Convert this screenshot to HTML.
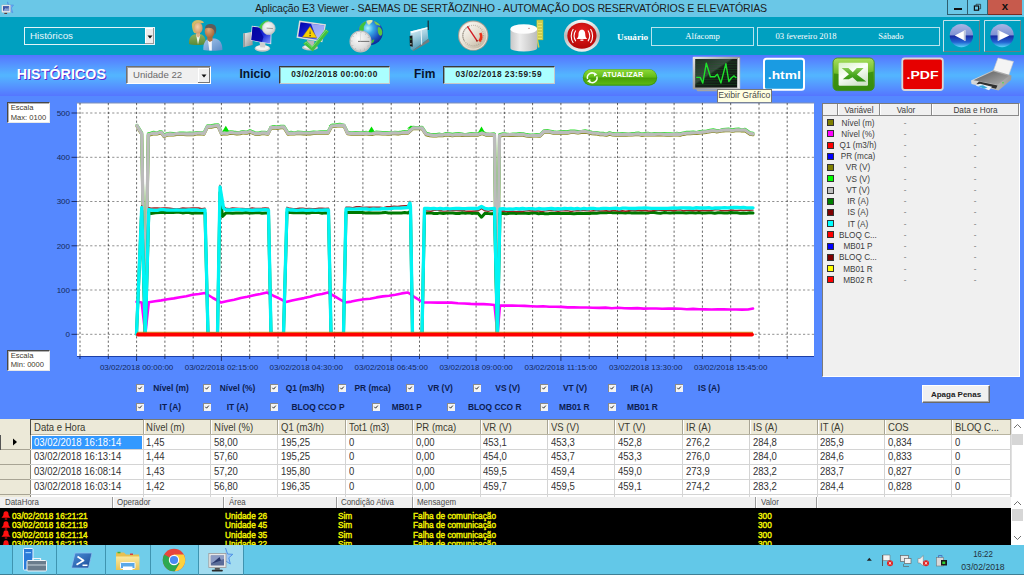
<!DOCTYPE html>
<html lang="pt-BR">
<head>
<meta charset="utf-8">
<title>Aplicação E3 Viewer - SAEMAS DE SERTÃOZINHO</title>
<style>
html,body{margin:0;padding:0;background:#5588ff;}
body{width:1024px;height:575px;overflow:hidden;position:relative;font-family:"Liberation Sans",sans-serif;}
.abs{position:absolute;}
#root{position:absolute;left:0;top:0;width:1024px;height:575px;overflow:hidden;background:#5588ff;}
#titlebar{left:0;top:0;width:1024px;height:17px;background:#6ac7e7;}
#title{left:0;top:1.5px;width:1022px;text-align:center;font-size:10.6px;color:#1c1c1c;white-space:nowrap;letter-spacing:-0.18px}
#toolbar{left:0;top:17px;width:1024px;height:37.5px;background:#00a0c0;}
#band{left:0;top:54.5px;width:1024px;height:41px;background:linear-gradient(to bottom,#5574ff 0%,#5596ff 25%,#53b4ff 48%,#53b4ff 52%,#5596ff 75%,#5576ff 100%);}
.ax{font-family:"Liberation Sans",sans-serif;font-size:8px;fill:#14285a;}
.sw{width:5px;height:5px;border:1px solid #333;}
.lt{font-size:8.2px;color:#3c3c3c;text-align:center;white-space:nowrap;line-height:12px;height:12px}
.cb{width:8px;height:8px;background:#f4f4f4;box-shadow:inset 1px 1px 0 #8a8a8a;line-height:0}
.cl{width:80px;text-align:center;font-size:8.4px;font-weight:bold;color:#0c1c50;white-space:nowrap;line-height:11px;margin-top:0.7px}
.th{font-size:10.3px;color:#3a3a30;white-space:nowrap;overflow:hidden;line-height:12px;height:12px;transform:scaleX(0.925);transform-origin:0 50%}
.td{font-size:10.3px;color:#333;white-space:nowrap;line-height:12px;transform:scaleX(0.925);transform-origin:0 50%}
.ah{font-size:8.8px;color:#4a4a4a;white-space:nowrap;line-height:10px;transform:scaleX(0.9);transform-origin:0 50%}
.ar{font-size:9.8px;color:#f2f200;white-space:nowrap;line-height:12px;font-weight:normal;-webkit-text-stroke:0.45px #f2f200}
.sq{display:inline-block;transform:scaleX(0.842);transform-origin:0 50%}
.inp{background:#aaffff;box-sizing:border-box;border:1px solid;border-color:#3a3a3a #c8c8c8 #c8c8c8 #3a3a3a;box-shadow:inset 1px 1px 0 #86a8a8;font-size:8.3px;font-weight:bold;color:#1e1e1e;text-align:center;line-height:15px;white-space:nowrap;letter-spacing:0.5px}
.lbl{font-size:12px;font-weight:bold;color:#08142e;white-space:nowrap;line-height:14px}
.esc{background:#fff;box-sizing:border-box;border:1px solid;border-color:#484848 #e8e8e8 #e8e8e8 #484848;box-shadow:inset 1px 1px 0 #b0b0b0;font-size:7.6px;color:#40382e;line-height:9.2px;padding:0 0 0 2.5px;white-space:nowrap}
.ubox{box-sizing:border-box;border:1px solid #b8e4ee;height:18.5px;font-family:"Liberation Serif",serif;font-size:8.6px;color:#fff;line-height:16px;white-space:nowrap}
.tbsep{top:545px;width:1px;height:30px;background:#3f94b0}
</style>
</head>
<body>
<div id="root">

<!-- ===== title bar ===== -->
<div id="titlebar" class="abs"></div>
<div id="title" class="abs">Aplicação E3 Viewer - SAEMAS DE SERTÃOZINHO - AUTOMAÇÃO DOS RESERVATÓRIOS E ELEVATÓRIAS</div>
<svg class="abs" style="left:0;top:0" width="16" height="16" viewBox="0 0 16 16">
  <path d="M7.500 1.800 L8.700 5 L13.600 5 L11.400 8 L12.800 12.800 L9 10.500 Z" fill="#6aa8f0" stroke="#4a86e0" stroke-width="0.500"/>
  <rect x="1.800" y="4.900" width="8.600" height="7.600" rx="0.600" fill="#f0f0f0" stroke="#b8b8b8" stroke-width="0.400"/>
  <rect x="3" y="6.100" width="6.200" height="5" fill="#3a58a8"/>
  <path d="M3 11.100 L6 7.500 L7 9.300 L8.300 6.800 L9.200 11.100 Z" fill="#8ca0d0"/>
  <rect x="4.300" y="12.900" width="2.800" height="0.900" fill="#5a1a10"/>
</svg>
<!-- window controls -->
<div class="abs" style="left:947px;top:0;width:21px;height:14.5px;box-sizing:border-box;border:1px solid #2e5f70;border-top:none;background:#6ac7e7"></div>
<div class="abs" style="left:967px;top:0;width:21px;height:14.5px;box-sizing:border-box;border:1px solid #2e5f70;border-top:none;background:#6ac7e7"></div>
<div class="abs" style="left:987.5px;top:0;width:34.5px;height:14.5px;box-sizing:border-box;border-bottom:1px solid #7a2a22;background:#c75a4c"></div>
<div class="abs" style="left:953.5px;top:7.5px;width:8px;height:2px;background:#111"></div>
<svg class="abs" style="left:973px;top:2.5px" width="9" height="9" viewBox="0 0 9 9"><path d="M3 2.6 V1.3 H7.6 V5.8 H6.2" fill="none" stroke="#222" stroke-width="0.7"/><rect x="1.4" y="3" width="4.2" height="4.2" fill="none" stroke="#111" stroke-width="1.2"/></svg>
<div class="abs" style="left:999px;top:-1px;width:12px;text-align:center;font-size:11.5px;font-weight:bold;color:#111;line-height:15px">x</div>

<!-- ===== toolbar ===== -->
<div id="toolbar" class="abs"></div>
<div class="abs" style="left:24px;top:27px;width:131px;height:18px;box-sizing:border-box;border:1px solid #e4f4f8"></div>
<div class="abs" style="left:30px;top:29.5px;font-size:9.8px;color:#e8f6fa;line-height:12px">Históricos</div>
<div class="abs" style="left:144.5px;top:28px;width:9.5px;height:16px;background:#ececec;box-shadow:inset -1px -1px 0 #999, inset 1px 1px 0 #fff"></div>
<svg class="abs" style="left:146.5px;top:35px" width="6" height="4" viewBox="0 0 6 4"><path d="M0.5 0.5 H5.5 L3 3.5 Z" fill="#111"/></svg>

<svg class="abs" style="left:0;top:17px" width="1024" height="38" viewBox="0 17 1024 38">
<defs>
  <radialGradient id="skin1" cx="0.4" cy="0.4" r="0.7"><stop offset="0" stop-color="#f4d0a8"/><stop offset="1" stop-color="#c89060"/></radialGradient>
  <radialGradient id="skin2" cx="0.4" cy="0.4" r="0.7"><stop offset="0" stop-color="#e0a878"/><stop offset="1" stop-color="#a06030"/></radialGradient>
  <linearGradient id="gbody" x1="0" y1="0" x2="0" y2="1"><stop offset="0" stop-color="#8ab060"/><stop offset="1" stop-color="#5a8a38"/></linearGradient>
  <linearGradient id="bbody" x1="0" y1="0" x2="1" y2="1"><stop offset="0" stop-color="#a8c8ec"/><stop offset="1" stop-color="#5a8ac8"/></linearGradient>
  <linearGradient id="scr" x1="0" y1="0" x2="1" y2="1"><stop offset="0" stop-color="#0000a8"/><stop offset="0.55" stop-color="#1a2ad8"/><stop offset="1" stop-color="#8098ff"/></linearGradient>
  <linearGradient id="silver" x1="0" y1="0" x2="1" y2="1"><stop offset="0" stop-color="#f4f4f4"/><stop offset="1" stop-color="#8c8c8c"/></linearGradient>
  <radialGradient id="clockf" cx="0.4" cy="0.35" r="0.8"><stop offset="0" stop-color="#fbfbfb"/><stop offset="0.6" stop-color="#dedede"/><stop offset="1" stop-color="#b4b4b4"/></radialGradient>
  <radialGradient id="globe" cx="0.4" cy="0.33" r="0.75"><stop offset="0" stop-color="#b0f8ff"/><stop offset="0.3" stop-color="#38a8e8"/><stop offset="0.7" stop-color="#1a48b8"/><stop offset="1" stop-color="#0a1a88"/></radialGradient>
  <linearGradient id="gauge" x1="0.15" y1="0.1" x2="0.85" y2="0.9"><stop offset="0" stop-color="#fbf9f4"/><stop offset="0.5" stop-color="#e6dfd2"/><stop offset="1" stop-color="#c4b8a4"/></linearGradient>
  <linearGradient id="tank" x1="0" y1="0" x2="1" y2="0"><stop offset="0" stop-color="#c8c8c8"/><stop offset="0.35" stop-color="#ececec"/><stop offset="1" stop-color="#bcbcbc"/></linearGradient>
  <linearGradient id="ring" x1="0" y1="0" x2="0" y2="1"><stop offset="0" stop-color="#f8f8f8"/><stop offset="0.5" stop-color="#b8b8b8"/><stop offset="1" stop-color="#f0f0f0"/></linearGradient>
  <radialGradient id="redb" cx="0.5" cy="0.35" r="0.8"><stop offset="0" stop-color="#e82020"/><stop offset="1" stop-color="#a80000"/></radialGradient>
  <linearGradient id="navb" x1="0" y1="0" x2="0" y2="1"><stop offset="0" stop-color="#aab6e4"/><stop offset="0.46" stop-color="#8093d4"/><stop offset="0.52" stop-color="#1a2ca4"/><stop offset="0.78" stop-color="#2264d2"/><stop offset="1" stop-color="#5cd6fa"/></linearGradient>
  <linearGradient id="router" x1="0" y1="0" x2="0.3" y2="1"><stop offset="0" stop-color="#e4f4fa"/><stop offset="0.45" stop-color="#a4d0e0"/><stop offset="1" stop-color="#4a94b0"/></linearGradient>
</defs>

<!-- 1 users -->
<g>
  <path d="M192 26 C191.200 21.500 195 19.800 198.500 20.200 C201.500 20.300 203.800 21.300 204 22.800 C202 23.300 200.500 23.500 199.500 24 L196.500 33.500 C193.500 33.800 192.300 30 192 26 Z" fill="#cdb565"/>
  <path d="M189 44 C188.600 38.500 190.500 35.200 195 34.300 L200.500 34.300 C204 35 205.800 38 205.800 44 C202 45.300 193 45.300 189 44 Z" fill="url(#gbody)"/>
  <path d="M196 34.300 L198 44.600 L200.300 34.800 Z" fill="#eef4e8"/>
  <path d="M196.300 31 H200 V36 L198.200 37.500 L196.300 36 Z" fill="#dcb088"/>
  <ellipse cx="198.400" cy="28" rx="4.200" ry="5.500" fill="url(#skin1)"/>
  <path d="M193.800 27.500 C193.500 23.500 196 22 199.500 22.300 C201 22.500 202.300 22.800 203.300 22.600 C202.500 21 199.500 20 197 20.500 C194 21 192.500 24 193.800 27.500 Z" fill="#d4bc6c"/>
  <path d="M203.300 50 C203 43 205.500 39.200 210 38.500 L215 38.500 C220 39.300 222.500 43.500 222.400 50 C218 51 207.500 51 203.300 50 Z" fill="url(#bbody)"/>
  <path d="M207.800 38.800 L209.300 50.600 L211.800 50.600 L211.800 39.500 Z" fill="#f2f5fb"/>
  <path d="M207.300 35 H212.500 V40.500 L209.800 42 L207.300 40 Z" fill="#a87040"/>
  <ellipse cx="209.700" cy="31.300" rx="5" ry="6.500" fill="url(#skin2)"/>
  <path d="M205 28.500 C205 24.800 208.500 23.600 211.500 24 C215 24.300 216.600 27 216.200 30.500 C216 32.500 215.500 33.500 214.800 34.500 C214.800 31.500 214 29.300 211.800 28.300 C209.500 27.300 207 27.500 205 28.500 Z" fill="#5c5c5c"/>
</g>

<!-- 2 computer + clock -->
<g>
  <path d="M243.400 33.400 L252.400 31.700 L252.700 44.900 L243.300 47.300 Z" fill="url(#silver)"/>
  <path d="M243.400 33.400 L245 33.100 L245 46.900 L243.300 47.300 Z" fill="#9c9c9c"/>
  <ellipse cx="262.400" cy="48.400" rx="7.700" ry="3.300" fill="#c8c8c8"/>
  <ellipse cx="262.400" cy="47.700" rx="6.600" ry="2.400" fill="#f2f2f2"/>
  <path d="M259.500 42 L265.500 43.300 L265 47.500 L260.300 47.300 Z" fill="#cfcfcf"/>
  <path d="M251.800 25.800 L271.600 28.500 L271.200 44.300 L250.600 40.600 Z" fill="#e8e8e8"/>
  <path d="M252.600 26.800 L270.800 29.300 L270.400 43.500 L251.400 40 Z" fill="url(#scr)"/>
  <path d="M252.600 26.800 L258.500 27.600 L263.500 37 L262 42 L251.400 40 Z" fill="#0505a0" opacity="0.800"/>
  <path d="M259 27.600 C260.200 23.800 263.800 20.800 268.400 20.200 L268.800 22.800 C265.600 23.400 263.600 25.200 262.800 27.400 L264.900 27 L261.900 30.200 L258.300 26.400 Z" fill="#46cc46"/>
  <circle cx="268.700" cy="28.200" r="6.400" fill="url(#clockf)" stroke="#c8c8c8" stroke-width="0.800"/>
  <path d="M266.600 28.100 L273 28.600" stroke="#8a8a8a" stroke-width="0.800"/>
</g>

<!-- 3 monitor + warning + check -->
<g>
  <ellipse cx="310" cy="47.500" rx="8" ry="3" fill="#c4c4c4"/>
  <ellipse cx="310" cy="46.800" rx="6.400" ry="2" fill="#ececec"/>
  <path d="M307 40 L314.500 41 L314 46 L307.500 45.500 Z" fill="#b8b8b8"/>
  <path d="M299.200 20.500 L326 24.300 L322.300 42.300 L296.500 37.800 Z" fill="#dcdcdc"/>
  <path d="M300.500 22.200 L324.300 25.600 L321.200 40.500 L298.200 36.500 Z" fill="url(#scr)"/>
  <path d="M311 23.800 L324.300 25.600 L321.200 40.500 L317 39.800 Z" fill="#c8d4ff" opacity="0.75"/>
  <path d="M310 26.500 L316.800 37.800 L302.500 37 Z" fill="#f8d000" stroke="#b08800" stroke-width="0.5"/>
  <path d="M310 29.500 L309.600 34 L310.600 34 Z M309.500 35 H310.700 V36.200 H309.500 Z" fill="#222"/>
  <path d="M303.200 43.600 L306.600 41 L312.200 46.300 L325.600 29 L328.900 31.600 L312.800 51.500 Z" fill="#44c040"/>
  <path d="M304.500 43.300 L306.400 42.200 L312 47.300 L326.200 30.200 L327.500 31.300" fill="none" stroke="#8ae880" stroke-width="0.8"/>
</g>

<!-- 4 globe + clock -->
<g>
  <circle cx="370.300" cy="32.400" r="12.500" fill="url(#globe)"/>
  <path d="M359 29.500 C359.500 25.500 362.500 22.300 365.800 21.300 C366.500 23 364.800 25 363.800 26.500 C363.600 28.300 364.300 30 363 31 C361.500 31.500 359.800 31 359 29.500 Z" fill="#3fc23a"/>
  <path d="M366.400 20.800 C368.500 19.900 371 19.900 372.800 20.500 C372.500 22.500 370.500 23 369.300 24.800 C367.800 25 366.800 23 366.400 20.800 Z" fill="#dfe9b0"/>
  <path d="M374 21 C376.500 21.600 379 23.400 380.500 25.600 C379.300 26.200 378 24.800 376.500 24.800 C375.300 24 374.500 22.500 374 21 Z" fill="#7ccc50"/>
  <path d="M378.300 27 C380.300 27 381.800 29 382.300 31.800 C382.500 34 381.800 35.800 380.300 35.800 C378.500 35 377.800 32.500 377.800 30.500 C377.600 29 377.800 27.800 378.300 27 Z" fill="#5cc43c"/>
  <path d="M371 42.300 C371.300 40.300 373 39 374.300 39.500 C374.300 41.300 373.300 42.800 371.800 43.500 Z" fill="#3cb838"/>
  <circle cx="360.500" cy="41.400" r="10.400" fill="url(#clockf)" stroke="#bdbdbd" stroke-width="1.200"/>
  <circle cx="360.500" cy="41.400" r="8.700" fill="none" stroke="#8a8a8a" stroke-width="1" stroke-dasharray="0.500,4.050"/>
  <path d="M358 41.400 H369.200" stroke="#707070" stroke-width="1"/>
  <path d="M360.500 33.500 V41.400" stroke="#d0d0d0" stroke-width="0.600"/>
</g>

<!-- 5 router -->
<g>
  <path d="M427.600 20.400 L428.800 20.400 L428.900 30 L427.500 30 Z" fill="#1c2c38"/>
  
  <path d="M410.300 31.600 L427.300 27.200 L428.300 38.800 L412.500 50.600 L410.600 49 Z" fill="url(#router)"/>
  <path d="M415.800 48.200 L428.400 38.800 L429.600 41.800 L413.500 51 L412.500 50.600 Z" fill="#747c80"/>
  <path d="M410.300 31.600 L427.300 27.200 L427.400 28.600 L411.500 33.200 Z" fill="#f8feff"/>
  <path d="M420.600 29.600 L421.600 29.300 L422.200 44.300 L421.300 44.900 Z" fill="#eaf6fa"/>
  <path d="M409.600 36 L412.400 35.500 L412.700 46.800 L409.900 46 Z" fill="#16181a"/>
  <rect x="410.400" y="38.500" width="1" height="1.200" fill="#30e040"/>
  <rect x="410.400" y="43" width="1" height="1.500" fill="#d8e8d8"/>
</g>

<!-- 6 gauge -->
<g>
  <circle cx="473.200" cy="35.600" r="15.200" fill="#a49c92"/>
  <circle cx="473.200" cy="35.600" r="14.200" fill="#ece6da"/>
  <circle cx="473.200" cy="35.600" r="13.200" fill="url(#gauge)"/>
  <circle cx="473.200" cy="35.600" r="10.300" fill="none" stroke="#a49c8e" stroke-width="1.300" stroke-dasharray="0.600,1.400"/>
  <path d="M464.300 41 A10.300 10.300 0 0 1 469.300 26" fill="none" stroke="#9a9288" stroke-width="0.800"/>
  <path d="M480.300 33 C481.600 35.500 481.300 39 479.300 41.400" fill="none" stroke="#ea3018" stroke-width="2.600"/>
  <path d="M467.400 26.300 L477.100 40.900" stroke="#d01c24" stroke-width="1.400"/>
  <circle cx="477" cy="40.800" r="0.900" fill="#901010"/>
</g>

<!-- 7 tank -->
<g>
  <rect x="537" y="20.200" width="5.800" height="19.500" fill="#e8e468" stroke="#c8c030" stroke-width="0.8"/>
  <path d="M538 22 H542 M538 25 H542 M538 28 H542 M538 31 H542 M538 34 H542 M538 37 H542" stroke="#a8a428" stroke-width="0.8"/>
  <path d="M537.200 39 L538.800 47.500" stroke="#d0cc50" stroke-width="1.600"/>
  <path d="M510.400 29 L510.400 48 A13.400 3.600 0 0 0 537.200 48 L537.200 29 Z" fill="url(#tank)"/>
  <ellipse cx="523.800" cy="29" rx="13.400" ry="4.800" fill="#fdfdfd"/>
  <circle cx="529" cy="28.300" r="0.600" fill="#a05050"/>
</g>

<!-- 8 alarm -->
<g>
  <ellipse cx="581.900" cy="35.800" rx="18" ry="16" fill="url(#ring)"/>
  <ellipse cx="581.900" cy="35.800" rx="14.600" ry="13" fill="url(#redb)"/>
  <path d="M581.900 29.800 C579 29.800 578.600 32.500 578.500 35 C578.400 37.300 577.300 38.200 576.700 39 L587.100 39 C586.500 38.200 585.400 37.300 585.300 35 C585.200 32.500 584.800 29.800 581.900 29.800 Z" fill="#fff"/>
  <rect x="580.400" y="39.500" width="3" height="1.300" fill="#fff"/>
  <path d="M575.800 30.500 C573.800 33.500 573.800 38 575.800 41.200 M573.300 29 C570.500 33 570.500 38.800 573.300 43 M588 30.500 C590 33.500 590 38 588 41.200 M590.500 29 C593.300 33 593.300 38.800 590.500 43" fill="none" stroke="#fff" stroke-width="1.100"/>
</g>

<!-- nav buttons -->
<g>
  <rect x="943.500" y="20.500" width="36" height="31" fill="none" stroke="#6a7c84" stroke-width="1"/>
  <path d="M943.500 51.500 V20.500 H979.500" fill="none" stroke="#c4e2ea" stroke-width="1"/>
  <rect x="984.500" y="20.500" width="36" height="31" fill="none" stroke="#6a7c84" stroke-width="1"/>
  <path d="M984.500 51.500 V20.500 H1020.500" fill="none" stroke="#c4e2ea" stroke-width="1"/>
  <circle cx="961.400" cy="35.600" r="11.700" fill="url(#navb)"/>
  <circle cx="1002.100" cy="35.600" r="11.700" fill="url(#navb)"/>
  <path d="M965.400 30 L965.400 41 L954.800 35.600 Z" fill="#fff"/>
  <path d="M963.800 30.800 L965.400 30 L965.400 41 L963.800 40.200 Z" fill="#c0c8d8"/>
  <path d="M997.800 30 L997.800 41 L1009.300 35.600 Z" fill="#fff"/>
  <path d="M997.800 30 L999.400 30.800 L999.400 40.200 L997.800 41 Z" fill="#c8d0dc"/>
</g>
</svg>


<!-- user / date boxes -->
<div class="abs" style="left:617px;top:31px;font-family:'Liberation Serif',serif;font-weight:bold;font-size:9.2px;color:#fff;line-height:12px">Usuário</div>
<div class="abs ubox" style="left:651px;top:27px;width:103px;text-align:center">Alfacomp</div>
<div class="abs ubox" style="left:757px;top:27px;width:183px"></div>
<div class="abs" style="left:756px;top:28px;width:100px;text-align:center;font-family:'Liberation Serif',serif;font-size:8.6px;color:#fff;line-height:16px;white-space:nowrap">03 fevereiro 2018</div>
<div class="abs" style="left:861px;top:28px;width:60px;text-align:center;font-family:'Liberation Serif',serif;font-size:8.6px;color:#fff;line-height:16px;white-space:nowrap">Sábado</div>

<!-- ===== historicos band ===== -->
<div id="band" class="abs"></div>
<div class="abs" style="left:16.700px;top:66.200px;font-size:14.200px;font-weight:bold;color:#fff;text-shadow:1px 1px 0 #5a2ad0;line-height:17px;white-space:nowrap;letter-spacing:0.1px">HISTÓRICOS</div>
<div class="abs" style="left:126px;top:65.5px;width:85px;height:18.5px;box-sizing:border-box;background:#f0f0f0;border:1px solid;border-color:#707070 #fff #fff #707070;box-shadow:inset 1px 1px 0 #a0a0a0"></div>
<div class="abs" style="left:133px;top:68.5px;font-size:9.6px;color:#6a6a6a;line-height:12px;white-space:nowrap">Unidade 22</div>
<div class="abs" style="left:197.5px;top:67.5px;width:12px;height:15px;background:#f0f0f0;box-shadow:inset -1px -1px 0 #777, inset 1px 1px 0 #fff"></div>
<svg class="abs" style="left:200.5px;top:73.5px" width="6" height="4" viewBox="0 0 6 4"><path d="M0.5 0.5 H5.5 L3 3.5 Z" fill="#111"/></svg>
<div class="abs lbl" style="left:239.5px;top:67px">Inicio</div>
<div class="abs inp" style="left:279px;top:66px;width:111px;height:18px">03/02/2018 00:00:00</div>
<div class="abs lbl" style="left:414px;top:67px">Fim</div>
<div class="abs inp" style="left:443px;top:66px;width:111.5px;height:18px">03/02/2018 23:59:59</div>

<svg class="abs" style="left:560px;top:55px" width="464" height="50" viewBox="560 55 464 50">
<defs>
  <linearGradient id="pill" x1="0" y1="0" x2="0" y2="1"><stop offset="0" stop-color="#8cd838"/><stop offset="0.5" stop-color="#62bc18"/><stop offset="0.58" stop-color="#48a008"/><stop offset="1" stop-color="#5cb814"/></linearGradient>
  <linearGradient id="mframe" x1="0" y1="0" x2="1" y2="1"><stop offset="0" stop-color="#e8e8e8"/><stop offset="0.5" stop-color="#9a9a9a"/><stop offset="1" stop-color="#d0d0d0"/></linearGradient>
  <linearGradient id="mscr" x1="0" y1="0" x2="1" y2="1"><stop offset="0" stop-color="#1c2c20"/><stop offset="0.42" stop-color="#3c4a42"/><stop offset="0.46" stop-color="#18221a"/><stop offset="1" stop-color="#0c140e"/></linearGradient>
  <linearGradient id="xl" x1="0" y1="0" x2="0" y2="1"><stop offset="0" stop-color="#a8de5c"/><stop offset="0.5" stop-color="#68b828"/><stop offset="1" stop-color="#3a9010"/></linearGradient>
  <linearGradient id="xlx" x1="0" y1="0" x2="0" y2="1"><stop offset="0" stop-color="#86cc54"/><stop offset="0.5" stop-color="#4aa820"/><stop offset="1" stop-color="#2f8f12"/></linearGradient>
  <linearGradient id="xli" x1="0" y1="0" x2="0.6" y2="1"><stop offset="0" stop-color="#d8f2c4"/><stop offset="0.5" stop-color="#fbfff8"/><stop offset="1" stop-color="#d4e4cc"/></linearGradient>
  <linearGradient id="prn" x1="0" y1="0" x2="1" y2="0"><stop offset="0" stop-color="#dcdcdc"/><stop offset="1" stop-color="#9c9c9c"/></linearGradient>
  <linearGradient id="prnt" x1="0" y1="0" x2="1" y2="1"><stop offset="0" stop-color="#5a5a5a"/><stop offset="1" stop-color="#b0b0b0"/></linearGradient>
</defs>
<!-- atualizar pill -->
<rect x="582.800" y="69.300" width="74.400" height="16.400" rx="8.200" fill="#3c9a10"/>
<rect x="583.500" y="69.500" width="73" height="15" rx="7.500" fill="url(#pill)"/>
<path d="M587.600 79 A4.600 4.600 0 0 1 595.200 74.300 M596.800 76.600 A4.600 4.600 0 0 1 589.200 81.300" fill="none" stroke="#f4fff0" stroke-width="1.500"/>
<path d="M593.800 72.300 L597.400 74.300 L594.200 76.600 Z M590.600 83.300 L587 81.300 L590.200 79 Z" fill="#f4fff0"/>
<text x="602.300" y="77.400" font-family="Liberation Sans, sans-serif" font-weight="bold" font-size="6.600" fill="#fff" textLength="41" lengthAdjust="spacingAndGlyphs">ATUALIZAR</text>

<!-- monitor -->
<rect x="692.700" y="56.800" width="47.500" height="32.500" rx="1" fill="url(#mframe)"/>
<rect x="738" y="58" width="1.400" height="30" fill="#f4f4f4" opacity="0.800"/>
<rect x="695.200" y="59" width="41.800" height="28.500" fill="url(#mscr)"/>
<g stroke="#1c5a24" stroke-width="0.500" opacity="0.800"><path d="M695.500 62 H737 M695.500 64.500 H737 M695.500 67 H737 M695.500 69.500 H737 M695.500 72 H737 M695.500 74.500 H737 M695.500 77 H737 M695.500 79.500 H737 M695.500 82 H737 M695.500 84.500 H737"/></g>
<path d="M696 89.300 H718 L716.500 91.200 H697.500 Z" fill="#a4a4a4"/>
<polyline points="696.200,77.400 700.200,77.400 702.800,83.100 706.300,63.200 710.400,76.800 714.800,76.800 717.400,74.200 720.900,83.100 725.900,63.700 728.800,81.500 731.300,78 733.900,75.900 736.400,78" fill="none" stroke="#1fe02c" stroke-width="1.400" stroke-linejoin="round"/>

<!-- .html -->
<rect x="764" y="58.700" width="40" height="31" rx="2.500" fill="#1a9be2" stroke="#fff" stroke-width="2"/>
<text x="784.300" y="78.600" text-anchor="middle" font-family="Liberation Sans, sans-serif" font-weight="bold" font-size="11.200" fill="#fff" textLength="33" lengthAdjust="spacingAndGlyphs">.html</text>

<!-- excel -->
<rect x="833" y="58" width="41.200" height="32.600" rx="4.500" fill="url(#xl)" stroke="#3a8610" stroke-width="0.800"/>
<path d="M834 73.500 C848 75.500 862 74.500 873.500 71.500 V86 C873.500 88.500 872 90 869.500 90 H838 C835.500 90 834 88.500 834 86 Z" fill="#368c0e" opacity="0.850"/>
<rect x="838.600" y="62.700" width="29.400" height="23" rx="1.200" fill="url(#xli)"/>
<path d="M841.700 67.900 H848.400 L852.800 72.200 L856.800 67.900 H863.600 L856.900 74.600 L866.200 81.500 H857.200 L852.500 77.300 L848.800 79.300 H842.800 L849 74.300 Z" fill="url(#xlx)"/>

<!-- pdf -->
<rect x="902.300" y="58.500" width="40.500" height="31.500" rx="2.500" fill="#e60000" stroke="#d8d8d8" stroke-width="1.800"/>
<text x="922.600" y="78.700" text-anchor="middle" font-family="Liberation Sans, sans-serif" font-weight="bold" font-size="11.200" fill="#fff" textLength="32" lengthAdjust="spacingAndGlyphs">.PDF</text>

<!-- printer -->
<path d="M998 58 L1013.500 61.500 L1008.500 76 L993 71.500 Z" fill="#f4f4f4" stroke="#c8c8c8" stroke-width="0.600"/>
<path d="M971 80.500 L993.500 70 L1011.500 75.500 L1011 80 L998.500 90.500 L971.500 84 Z" fill="url(#prn)"/>
<path d="M973.500 80.300 L993.300 71.300 L1008.800 76 L997.500 84.800 Z" fill="url(#prnt)"/>
<path d="M976.500 84 L996 88.800 L997.500 85.500 L979 81.500 Z" fill="#303030"/>
<path d="M975.500 85.500 L980 83.800 L992 86.800 L989 90.300 Z" fill="#e8f0f8"/>
<path d="M978 86 L983 85.300 L987.500 87.800 L984 88.800 Z" fill="#38a8d8"/>
<circle cx="1003" cy="82.800" r="0.800" fill="#40e040"/>
</svg>
<div class="abs" style="left:716.500px;top:89px;width:55.500px;height:13.500px;box-sizing:border-box;background:#ffffe1;border:1px solid #767676;font-size:8.700px;color:#4a4a4a;line-height:11.500px;text-align:center;white-space:nowrap">Exibir Gráfico</div>


<!-- ===== chart ===== -->
<div class="abs esc" style="left:7.200px;top:102.200px;width:43px;height:21px"><div style="margin-top:0.3px">Escala<br>Max: 0100</div></div>
<div class="abs esc" style="left:7.200px;top:349.800px;width:43px;height:21px"><div style="margin-top:0.3px">Escala<br>Min: 0000</div></div>
<svg class="abs" style="left:0;top:95px" width="1024" height="285" viewBox="0 95 1024 285">
<rect x="77" y="103" width="737" height="253.5" fill="#fff"/>
<rect x="76.5" y="102.5" width="738" height="1" fill="#7f8fb8"/>
<g stroke="#000" stroke-opacity="0.6" stroke-width="1" stroke-dasharray="2.2,2.2"><line x1="80.0" y1="103" x2="80.0" y2="356" /><line x1="108.3" y1="103" x2="108.3" y2="356" /><line x1="136.6" y1="103" x2="136.6" y2="356" /><line x1="164.9" y1="103" x2="164.9" y2="356" /><line x1="193.2" y1="103" x2="193.2" y2="356" /><line x1="221.4" y1="103" x2="221.4" y2="356" /><line x1="249.7" y1="103" x2="249.7" y2="356" /><line x1="278.0" y1="103" x2="278.0" y2="356" /><line x1="306.3" y1="103" x2="306.3" y2="356" /><line x1="334.6" y1="103" x2="334.6" y2="356" /><line x1="362.9" y1="103" x2="362.9" y2="356" /><line x1="391.2" y1="103" x2="391.2" y2="356" /><line x1="419.5" y1="103" x2="419.5" y2="356" /><line x1="447.8" y1="103" x2="447.8" y2="356" /><line x1="476.1" y1="103" x2="476.1" y2="356" /><line x1="504.3" y1="103" x2="504.3" y2="356" /><line x1="532.6" y1="103" x2="532.6" y2="356" /><line x1="560.9" y1="103" x2="560.9" y2="356" /><line x1="589.2" y1="103" x2="589.2" y2="356" /><line x1="617.5" y1="103" x2="617.5" y2="356" /><line x1="645.8" y1="103" x2="645.8" y2="356" /><line x1="674.1" y1="103" x2="674.1" y2="356" /><line x1="702.4" y1="103" x2="702.4" y2="356" /><line x1="730.7" y1="103" x2="730.7" y2="356" /><line x1="759.0" y1="103" x2="759.0" y2="356" /><line x1="787.2" y1="103" x2="787.2" y2="356" /></g>
<g stroke="#000" stroke-opacity="0.44" stroke-width="1" stroke-dasharray="2.2,2.2"><line x1="77" y1="334.3" x2="814" y2="334.3" /><line x1="77" y1="290.0" x2="814" y2="290.0" /><line x1="77" y1="245.8" x2="814" y2="245.8" /><line x1="77" y1="201.5" x2="814" y2="201.5" /><line x1="77" y1="157.3" x2="814" y2="157.3" /><line x1="77" y1="113.0" x2="814" y2="113.0" /></g>
<rect x="77" y="356" width="737" height="1" fill="#1c3fa8"/>
<g stroke="#1a2e6e" stroke-width="1"><line x1="80.0" y1="356" x2="80.0" y2="359" /><line x1="108.3" y1="356" x2="108.3" y2="359" /><line x1="136.6" y1="356" x2="136.6" y2="361" /><line x1="164.9" y1="356" x2="164.9" y2="359" /><line x1="193.2" y1="356" x2="193.2" y2="359" /><line x1="221.4" y1="356" x2="221.4" y2="361" /><line x1="249.7" y1="356" x2="249.7" y2="359" /><line x1="278.0" y1="356" x2="278.0" y2="359" /><line x1="306.3" y1="356" x2="306.3" y2="361" /><line x1="334.6" y1="356" x2="334.6" y2="359" /><line x1="362.9" y1="356" x2="362.9" y2="359" /><line x1="391.2" y1="356" x2="391.2" y2="361" /><line x1="419.5" y1="356" x2="419.5" y2="359" /><line x1="447.8" y1="356" x2="447.8" y2="359" /><line x1="476.1" y1="356" x2="476.1" y2="361" /><line x1="504.3" y1="356" x2="504.3" y2="359" /><line x1="532.6" y1="356" x2="532.6" y2="359" /><line x1="560.9" y1="356" x2="560.9" y2="361" /><line x1="589.2" y1="356" x2="589.2" y2="359" /><line x1="617.5" y1="356" x2="617.5" y2="359" /><line x1="645.8" y1="356" x2="645.8" y2="361" /><line x1="674.1" y1="356" x2="674.1" y2="359" /><line x1="702.4" y1="356" x2="702.4" y2="359" /><line x1="730.7" y1="356" x2="730.7" y2="361" /><line x1="759.0" y1="356" x2="759.0" y2="359" /><line x1="787.2" y1="356" x2="787.2" y2="359" /></g>
<line x1="71.5" y1="334.3" x2="77" y2="334.3" stroke="#1a2e6e" stroke-width="1"/>
<text x="70" y="337.1" text-anchor="end" class="ax">0</text>
<line x1="71.5" y1="290.0" x2="77" y2="290.0" stroke="#1a2e6e" stroke-width="1"/>
<text x="70" y="292.8" text-anchor="end" class="ax">100</text>
<line x1="71.5" y1="245.8" x2="77" y2="245.8" stroke="#1a2e6e" stroke-width="1"/>
<text x="70" y="248.6" text-anchor="end" class="ax">200</text>
<line x1="71.5" y1="201.5" x2="77" y2="201.5" stroke="#1a2e6e" stroke-width="1"/>
<text x="70" y="204.3" text-anchor="end" class="ax">300</text>
<line x1="71.5" y1="157.3" x2="77" y2="157.3" stroke="#1a2e6e" stroke-width="1"/>
<text x="70" y="160.1" text-anchor="end" class="ax">400</text>
<line x1="71.5" y1="113.0" x2="77" y2="113.0" stroke="#1a2e6e" stroke-width="1"/>
<text x="70" y="115.8" text-anchor="end" class="ax">500</text>
<text x="136.6" y="369.6" text-anchor="middle" class="ax">03/02/2018 00:00:00</text>
<text x="221.4" y="369.6" text-anchor="middle" class="ax">03/02/2018 02:15:00</text>
<text x="306.3" y="369.6" text-anchor="middle" class="ax">03/02/2018 04:30:00</text>
<text x="391.2" y="369.6" text-anchor="middle" class="ax">03/02/2018 06:45:00</text>
<text x="476.1" y="369.6" text-anchor="middle" class="ax">03/02/2018 09:00:00</text>
<text x="560.9" y="369.6" text-anchor="middle" class="ax">03/02/2018 11:15:00</text>
<text x="645.8" y="369.6" text-anchor="middle" class="ax">03/02/2018 13:30:00</text>
<text x="730.7" y="369.6" text-anchor="middle" class="ax">03/02/2018 15:45:00</text>
<polyline points="136.5,301.8 141.7,302.5 145.3,334.0 148.8,302.3 155.0,301.3 161.3,300.4 167.5,299.3 173.8,298.4 180.0,297.3 186.3,296.3 192.5,294.8 198.8,294.0 205.0,293.0 213.0,298.0 221.0,302.5 227.6,301.1 234.1,299.8 240.7,298.0 247.3,296.8 253.9,295.2 260.4,294.0 267.0,292.5 273.3,295.7 279.7,298.6 286.0,302.0 292.0,300.5 298.0,299.2 304.0,298.1 310.0,296.7 316.0,295.0 322.0,294.0 328.0,292.5 336.5,297.3 345.0,302.5 351.3,301.6 357.6,300.3 363.9,299.3 370.2,298.7 376.5,297.4 382.8,296.4 389.1,295.7 395.4,294.7 401.7,293.4 408.0,292.5 415.5,297.7 423.0,302.5 430.3,302.5 437.7,302.6 445.0,302.5 451.4,302.6 457.9,303.3 464.3,303.5 470.7,303.9 477.1,304.1 483.6,304.1 490.0,304.5 494.5,305.0 497.5,334.0 500.0,305.5 506.2,305.6 512.3,305.6 518.5,305.8 524.6,305.9 530.8,306.2 536.9,306.5 543.1,306.3 549.2,306.8 555.4,306.8 561.5,306.9 567.7,307.4 573.8,307.3 580.0,307.5 586.4,307.5 592.7,307.7 599.1,307.9 605.5,307.6 611.8,308.2 618.2,307.8 624.5,308.3 630.9,308.4 637.3,308.1 643.6,308.6 650.0,308.5 656.2,308.5 662.3,308.7 668.5,308.5 674.6,308.6 680.8,308.7 686.9,309.2 693.1,308.9 699.2,309.2 705.4,309.4 711.5,309.5 717.7,309.3 723.8,309.4 730.0,309.5 736.0,309.5 742.0,309.6 748.0,309.5 753.0,308.5" fill="none" stroke="#ff00ff" stroke-width="2.6" stroke-linejoin="round" stroke-linecap="round" />
<polyline points="137.0,126.3 139.5,130.7 141.7,134.2 145.0,334.7 148.3,135.2 150.5,134.7 153.7,133.8 156.8,134.1 160.0,133.2 161.5,133.2 164.0,136.7 167.0,135.2 170.0,134.7 173.3,135.0 176.7,134.4 180.0,134.6 183.3,134.5 186.7,134.7 190.0,134.5 193.5,134.7 197.0,133.9 200.5,133.8 204.0,134.2 207.5,127.2 211.0,127.2 214.5,126.5 218.0,126.2 221.5,134.2 224.0,133.7 227.2,134.0 230.4,133.2 233.6,133.6 236.8,133.9 240.0,133.7 243.3,132.9 246.7,133.2 250.0,132.2 255.0,134.2 258.2,134.6 261.5,133.7 264.8,133.7 268.0,134.2 271.0,128.2 274.2,128.1 277.5,128.4 280.8,127.7 284.0,127.7 288.0,134.2 291.1,133.8 294.3,134.0 297.4,133.6 300.6,133.7 303.7,133.9 306.9,133.9 310.0,133.9 313.6,133.5 317.2,133.3 320.8,133.2 324.4,133.3 328.0,133.2 331.5,126.7 335.7,126.3 339.8,125.8 344.0,126.2 347.5,133.7 351.7,134.2 355.8,134.1 360.0,134.2 363.2,134.3 366.4,133.8 369.5,134.6 372.7,134.4 375.9,133.6 379.1,133.7 382.3,134.1 385.5,134.1 388.6,134.3 391.8,133.7 395.0,133.7 398.2,133.9 401.5,133.6 404.8,133.1 408.0,133.2 413.0,128.7 417.5,128.8 422.0,128.7 426.0,134.7 430.0,135.7 433.2,136.1 436.4,136.0 439.6,135.6 442.8,135.7 446.0,135.0 449.2,135.2 452.4,135.8 455.6,135.3 458.8,135.0 462.0,135.4 465.2,135.6 468.4,135.5 471.6,135.1 474.8,135.2 478.0,135.2 482.0,133.7 486.0,135.2 489.8,135.2 493.5,135.2 494.5,135.7 497.0,334.7 499.5,136.2 503.0,135.2 506.4,135.6 509.7,135.4 513.1,135.4 516.5,135.6 519.8,135.1 523.2,135.2 526.5,136.1 529.9,136.5 533.3,136.1 536.6,136.0 540.0,136.2 544.0,132.2 547.2,132.0 550.4,132.6 553.6,133.3 556.8,133.3 560.0,133.2 563.6,133.1 567.1,133.3 570.7,132.5 574.3,132.6 577.9,133.0 581.4,132.4 585.0,132.2 588.5,132.9 592.0,133.7 596.0,133.9 600.0,134.7 603.2,134.8 606.4,135.2 609.6,134.2 612.8,135.1 616.0,135.2 619.2,135.2 622.4,135.1 625.6,135.2 628.8,134.9 632.0,135.0 635.2,134.8 638.4,134.5 641.6,135.4 644.8,135.1 648.0,134.7 651.2,135.0 654.4,135.0 657.6,134.9 660.8,134.9 664.0,135.1 667.2,135.3 670.4,135.3 673.6,135.1 676.8,134.7 680.0,135.2 683.3,134.4 686.7,133.8 690.0,133.7 693.3,133.5 696.7,133.4 700.0,133.0 703.3,132.7 706.7,132.4 710.0,131.7 713.2,131.3 716.4,131.9 719.5,131.6 722.7,130.9 725.9,130.7 729.1,130.6 732.3,131.3 735.5,130.7 738.6,130.5 741.8,130.9 745.0,130.7 750.0,134.2 753.0,134.7" fill="none" stroke="#808000" stroke-width="3" stroke-linejoin="round" stroke-linecap="round" />
<polyline points="137.0,125.3 139.5,129.2 141.7,132.7 145.0,333.2 148.3,133.7 150.5,133.2 153.7,132.3 156.8,133.1 160.0,131.7 161.5,131.7 164.0,135.2 167.0,133.7 170.0,133.2 173.3,133.5 176.7,133.4 180.0,133.1 183.3,133.0 186.7,133.2 190.0,133.0 193.5,133.2 197.0,132.4 200.5,132.8 204.0,132.7 207.5,125.7 211.0,125.7 214.5,125.0 218.0,124.7 221.5,132.7 224.0,132.7 227.2,132.5 230.4,131.7 233.6,132.1 236.8,132.4 240.0,132.2 243.3,131.4 246.7,132.2 250.0,130.7 255.0,132.7 258.2,133.1 261.5,132.2 264.8,132.2 268.0,132.7 271.0,127.2 274.2,126.6 277.5,126.9 280.8,126.2 284.0,126.2 288.0,132.7 291.1,132.3 294.3,133.0 297.4,132.1 300.6,132.2 303.7,132.4 306.9,132.4 310.0,132.4 313.6,132.0 317.2,132.3 320.8,131.7 324.4,131.8 328.0,131.7 331.5,125.2 335.7,124.8 339.8,124.3 344.0,125.2 347.5,132.2 351.7,132.7 355.8,132.6 360.0,132.7 363.2,132.8 366.4,132.3 369.5,133.6 372.7,132.9 375.9,132.1 379.1,132.2 382.3,132.6 385.5,132.6 388.6,132.8 391.8,132.7 395.0,132.2 398.2,132.4 401.5,132.1 404.8,131.6 408.0,131.7 413.0,127.2 417.5,127.8 422.0,127.2 426.0,133.2 430.0,134.2 433.2,134.6 436.4,134.5 439.6,134.1 442.8,134.7 446.0,133.5 449.2,133.7 452.4,134.3 455.6,133.8 458.8,133.5 462.0,133.9 465.2,134.6 468.4,134.0 471.6,133.6 474.8,133.7 478.0,133.7 482.0,132.2 486.0,133.7 489.8,134.2 493.5,133.7 494.5,134.2 497.0,333.2 499.5,134.7 503.0,133.7 506.4,134.1 509.7,134.4 513.1,133.9 516.5,134.1 519.8,133.6 523.2,133.7 526.5,134.6 529.9,135.0 533.3,135.1 536.6,134.5 540.0,134.7 544.0,130.7 547.2,130.5 550.4,131.1 553.6,131.8 556.8,132.3 560.0,131.7 563.6,131.6 567.1,131.8 570.7,131.0 574.3,131.1 577.9,131.5 581.4,131.4 585.0,130.7 588.5,131.4 592.0,132.2 596.0,132.4 600.0,133.2 603.2,133.3 606.4,134.2 609.6,132.7 612.8,133.6 616.0,133.7 619.2,133.7 622.4,133.6 625.6,133.7 628.8,133.9 632.0,133.5 635.2,133.3 638.4,133.0 641.6,133.9 644.8,133.6 648.0,133.2 651.2,134.0 654.4,133.5 657.6,133.4 660.8,133.4 664.0,133.6 667.2,133.8 670.4,133.8 673.6,134.1 676.8,133.2 680.0,133.7 683.3,132.9 686.7,132.3 690.0,132.2 693.3,132.0 696.7,132.4 700.0,131.5 703.3,131.2 706.7,130.9 710.0,130.2 713.2,129.8 716.4,130.4 719.5,130.6 722.7,129.4 725.9,129.2 729.1,129.1 732.3,129.8 735.5,129.2 738.6,129.0 741.8,129.9 745.0,129.2 750.0,132.7 753.0,133.2" fill="none" stroke="#30e030" stroke-width="3" stroke-linejoin="round" stroke-linecap="round" />
<polygon points="221.8,132.5 225.8,125.8 229.8,132.5" fill="#00e000"/>
<polygon points="367.5,133.0 371.5,126.6 375.5,133.0" fill="#00e000"/>
<polygon points="477.5,133.5 481.5,126.6 485.5,133.5" fill="#00e000"/>
<polygon points="211.0,126.0 215.0,123.8 219.0,126.0" fill="#00e000"/>
<polygon points="269.0,127.0 273.0,125.3 277.0,127.0" fill="#00e000"/>
<polygon points="328.5,126.0 332.5,123.8 336.5,126.0" fill="#00e000"/>
<polygon points="407.0,128.5 411.0,125.5 415.0,128.5" fill="#00e000"/>
<polyline points="137.0,125.6 139.5,130.0 141.7,133.5 145.0,334.0 148.3,134.5 150.5,134.0 153.7,133.1 156.8,133.4 160.0,132.5 161.5,132.5 164.0,136.0 167.0,134.5 170.0,134.0 173.3,134.3 176.7,133.7 180.0,133.9 183.3,133.8 186.7,134.0 190.0,133.8 193.5,134.0 197.0,133.2 200.5,133.1 204.0,133.5 207.5,126.5 211.0,126.5 214.5,125.8 218.0,125.5 221.5,133.5 224.0,133.0 227.2,133.3 230.4,132.5 233.6,132.9 236.8,133.2 240.0,133.0 243.3,132.2 246.7,132.5 250.0,131.5 255.0,133.5 258.2,133.9 261.5,133.0 264.8,133.0 268.0,133.5 271.0,127.5 274.2,127.4 277.5,127.7 280.8,127.0 284.0,127.0 288.0,133.5 291.1,133.1 294.3,133.3 297.4,132.9 300.6,133.0 303.7,133.2 306.9,133.2 310.0,133.2 313.6,132.8 317.2,132.6 320.8,132.5 324.4,132.6 328.0,132.5 331.5,126.0 335.7,125.6 339.8,125.1 344.0,125.5 347.5,133.0 351.7,133.5 355.8,133.4 360.0,133.5 363.2,133.6 366.4,133.1 369.5,133.9 372.7,133.7 375.9,132.9 379.1,133.0 382.3,133.4 385.5,133.4 388.6,133.6 391.8,133.0 395.0,133.0 398.2,133.2 401.5,132.9 404.8,132.4 408.0,132.5 413.0,128.0 417.5,128.1 422.0,128.0 426.0,134.0 430.0,135.0 433.2,135.4 436.4,135.3 439.6,134.9 442.8,135.0 446.0,134.3 449.2,134.5 452.4,135.1 455.6,134.6 458.8,134.3 462.0,134.7 465.2,134.9 468.4,134.8 471.6,134.4 474.8,134.5 478.0,134.5 482.0,133.0 486.0,134.5 489.8,134.5 493.5,134.5 494.5,135.0 497.0,334.0 499.5,135.5 503.0,134.5 506.4,134.9 509.7,134.7 513.1,134.7 516.5,134.9 519.8,134.4 523.2,134.5 526.5,135.4 529.9,135.8 533.3,135.4 536.6,135.3 540.0,135.5 544.0,131.5 547.2,131.3 550.4,131.9 553.6,132.6 556.8,132.6 560.0,132.5 563.6,132.4 567.1,132.6 570.7,131.8 574.3,131.9 577.9,132.3 581.4,131.7 585.0,131.5 588.5,132.2 592.0,133.0 596.0,133.2 600.0,134.0 603.2,134.1 606.4,134.5 609.6,133.5 612.8,134.4 616.0,134.5 619.2,134.5 622.4,134.4 625.6,134.5 628.8,134.2 632.0,134.3 635.2,134.1 638.4,133.8 641.6,134.7 644.8,134.4 648.0,134.0 651.2,134.3 654.4,134.3 657.6,134.2 660.8,134.2 664.0,134.4 667.2,134.6 670.4,134.6 673.6,134.4 676.8,134.0 680.0,134.5 683.3,133.7 686.7,133.1 690.0,133.0 693.3,132.8 696.7,132.7 700.0,132.3 703.3,132.0 706.7,131.7 710.0,131.0 713.2,130.6 716.4,131.2 719.5,130.9 722.7,130.2 725.9,130.0 729.1,129.9 732.3,130.6 735.5,130.0 738.6,129.8 741.8,130.2 745.0,130.0 750.0,133.5 753.0,134.0" fill="none" stroke="#bbbbbb" stroke-width="3.3" stroke-linejoin="round" stroke-linecap="round" />
<polyline points="136.5,334.0 141.7,210.4 145.3,334.0 148.8,212.4 151.0,213.4 155.5,212.7 160.0,212.4 163.2,212.5 166.4,212.4 169.6,212.6 172.9,212.6 176.1,212.2 179.3,212.2 182.5,212.9 185.7,212.5 188.9,212.5 192.1,213.2 195.4,212.8 198.6,213.1 201.8,212.8 205.0,212.9 208.0,334.0 211.2,334.1 214.3,333.7 217.5,334.0 220.0,192.4 222.5,216.4 226.0,212.9 229.3,213.0 232.5,213.2 235.8,212.9 239.1,213.1 242.3,213.0 245.6,212.6 248.9,213.1 252.2,213.0 255.4,212.7 258.7,212.5 262.0,213.2 265.2,212.9 268.5,212.9 271.0,334.0 275.2,334.2 279.3,334.3 283.5,334.0 287.0,212.4 290.2,212.6 293.4,212.8 296.6,212.4 299.8,212.8 303.0,212.5 306.2,213.0 309.3,213.0 312.5,212.4 315.7,212.5 318.9,212.6 322.1,213.2 325.3,212.8 328.5,212.9 331.0,334.0 335.2,334.1 339.3,333.8 343.5,334.0 346.0,212.4 349.3,212.4 352.5,212.4 355.8,212.4 359.1,212.6 362.3,212.6 365.6,212.9 368.8,212.7 372.1,213.0 375.4,212.9 378.6,213.1 381.9,212.8 385.2,212.4 388.4,213.0 391.7,213.1 394.9,213.1 398.2,212.9 401.5,213.0 404.7,212.6 408.0,212.9 410.5,211.4 412.5,334.0 415.7,334.3 418.8,334.1 422.0,334.0 424.5,213.2 427.6,213.0 430.8,212.9 433.9,213.5 437.1,213.6 440.2,212.9 443.4,213.4 446.5,213.1 449.7,212.9 452.8,213.0 456.0,213.4 459.1,213.5 462.3,212.8 465.4,213.3 468.6,212.8 471.7,213.4 474.9,213.1 478.0,213.2 481.5,217.2 485.0,213.2 488.2,213.6 491.3,213.7 494.5,213.4 497.5,334.0 500.0,213.4 503.2,213.4 506.4,213.8 509.6,213.2 512.9,213.1 516.1,213.5 519.3,213.0 522.5,213.2 525.7,213.3 528.9,213.5 532.1,213.1 535.4,213.0 538.6,213.7 541.8,213.3 545.0,213.8 548.2,213.7 551.4,213.3 554.6,213.4 557.9,213.4 561.1,213.5 564.3,213.5 567.5,213.4 570.7,213.5 573.9,213.8 577.1,213.4 580.4,213.3 583.6,213.6 586.8,213.2 590.0,213.4 593.3,213.0 596.7,213.3 600.0,212.7 603.2,212.7 606.4,212.8 609.6,212.3 612.8,212.7 615.9,212.8 619.1,212.4 622.3,212.8 625.5,212.9 628.7,212.4 631.9,212.9 635.1,212.7 638.2,212.9 641.4,212.7 644.6,213.0 647.8,213.0 651.0,212.4 654.2,212.5 657.4,213.0 660.6,213.2 663.8,212.6 666.9,212.8 670.1,212.9 673.3,212.7 676.5,212.7 679.7,212.7 682.9,212.8 686.1,212.9 689.2,212.7 692.4,212.8 695.6,213.1 698.8,212.5 702.0,213.0 705.2,213.1 708.4,212.8 711.6,212.7 714.8,213.2 717.9,212.7 721.1,212.7 724.3,212.9 727.5,213.1 730.7,212.6 733.9,212.8 737.1,212.8 740.2,213.2 743.4,212.9 746.6,213.3 749.8,212.7 753.0,213.0" fill="none" stroke="#007800" stroke-width="3" stroke-linejoin="round" stroke-linecap="round" />
<polyline points="136.5,334.0 141.7,205.8 145.3,334.0 148.8,207.8 151.0,208.3 154.2,208.0 157.4,207.9 160.5,208.2 163.7,208.0 166.9,207.9 170.1,208.2 173.2,208.7 176.4,208.6 179.6,208.6 182.8,208.0 185.9,208.3 189.1,208.1 192.3,208.0 195.5,207.9 198.6,208.0 201.8,208.7 205.0,208.3 208.0,334.0 211.2,334.3 214.3,334.3 217.5,334.0 220.0,185.3 223.5,206.3 226.0,208.3 229.3,208.6 232.5,208.0 235.8,208.1 239.1,208.4 242.3,208.5 245.6,208.7 248.9,208.7 252.2,207.9 255.4,208.4 258.7,208.5 262.0,208.3 265.2,208.0 268.5,208.3 271.0,334.0 275.2,334.0 279.3,333.6 283.5,334.0 287.0,207.3 290.0,208.3 293.2,208.7 296.4,208.7 299.6,208.3 302.8,208.1 306.0,208.7 309.2,208.4 312.5,208.7 315.7,208.6 318.9,208.3 322.1,208.2 325.3,208.4 328.5,208.3 331.0,334.0 335.2,333.9 339.3,333.7 343.5,334.0 346.0,207.3 349.4,207.1 352.8,207.6 356.2,206.8 359.6,206.8 363.0,207.4 366.4,207.1 369.8,207.3 373.2,207.3 376.6,207.1 380.0,207.3 383.5,207.6 387.0,206.6 390.5,206.7 394.0,206.3 397.5,206.5 401.0,206.0 404.5,205.8 408.0,205.8 410.0,201.3 410.5,205.3 412.5,334.0 415.7,334.2 418.8,333.8 422.0,334.0 424.5,210.8 427.6,210.9 430.8,211.2 433.9,210.4 437.1,210.4 440.2,210.5 443.4,211.1 446.5,210.9 449.7,210.5 452.8,210.6 456.0,210.5 459.1,210.8 462.3,210.3 465.4,211.0 468.6,211.2 471.7,211.3 474.9,211.0 478.0,210.8 481.5,208.6 485.0,210.8 488.2,211.3 491.3,210.3 494.5,210.8 497.5,334.0 500.0,211.2 503.2,211.0 506.5,211.6 509.7,211.4 512.9,211.1 516.1,211.6 519.4,211.3 522.6,211.5 525.8,210.9 529.0,210.8 532.3,211.0 535.5,210.7 538.7,211.0 541.9,211.5 545.2,210.9 548.4,210.6 551.6,210.6 554.8,210.7 558.1,211.3 561.3,210.9 564.5,210.8 567.7,210.6 571.0,211.5 574.2,210.9 577.4,210.7 580.6,210.5 583.9,210.5 587.1,210.6 590.3,211.1 593.5,210.6 596.8,210.5 600.0,210.9 603.2,210.9 606.4,210.6 609.6,211.3 612.9,210.4 616.1,210.8 619.3,211.0 622.5,210.7 625.7,211.2 628.9,210.7 632.1,210.4 635.4,210.6 638.6,210.2 641.8,210.5 645.0,210.3 648.2,211.0 651.4,210.9 654.6,210.5 657.9,210.0 661.1,210.2 664.3,210.2 667.5,210.2 670.7,210.2 673.9,210.8 677.1,210.0 680.4,209.9 683.6,210.8 686.8,210.4 690.0,210.3 693.1,210.8 696.3,210.2 699.5,210.7 702.6,210.4 705.8,210.5 708.9,210.5 712.0,210.2 715.2,209.8 718.4,209.9 721.5,210.6 724.6,210.6 727.8,210.6 731.0,210.0 734.1,210.3 737.2,210.4 740.4,210.3 743.5,210.4 746.7,210.1 749.9,210.3 753.0,210.1" fill="none" stroke="#a02020" stroke-width="1.4" stroke-linejoin="round" stroke-linecap="round" />
<polyline points="136.5,334.0 141.7,207.5 145.3,334.0 148.8,209.5 151.0,210.0 154.2,210.3 157.4,210.3 160.5,209.7 163.7,209.7 166.9,210.2 170.1,210.2 173.2,210.1 176.4,209.9 179.6,210.1 182.8,210.1 185.9,210.1 189.1,209.8 192.3,210.0 195.5,209.9 198.6,210.2 201.8,210.3 205.0,210.0 208.0,334.0 211.2,334.3 214.3,334.0 217.5,334.0 220.0,187.0 223.5,208.0 226.0,210.0 229.3,210.0 232.5,209.8 235.8,209.7 239.1,209.7 242.3,210.0 245.6,209.9 248.9,209.9 252.2,210.3 255.4,210.0 258.7,210.0 262.0,209.8 265.2,209.7 268.5,210.0 271.0,334.0 275.2,333.9 279.3,333.7 283.5,334.0 287.0,209.0 290.0,210.0 293.2,210.0 296.4,210.3 299.6,210.1 302.8,209.8 306.0,210.3 309.2,210.2 312.5,210.2 315.7,210.3 318.9,210.2 322.1,210.2 325.3,209.9 328.5,210.0 331.0,334.0 335.2,334.3 339.3,334.3 343.5,334.0 346.0,209.0 349.4,208.8 352.8,209.2 356.2,209.2 359.6,209.0 363.0,209.0 366.4,209.0 369.8,209.3 373.2,209.0 376.6,209.2 380.0,209.0 383.5,208.7 387.0,208.9 390.5,208.7 394.0,208.2 397.5,208.1 401.0,208.2 404.5,207.8 408.0,207.5 410.0,203.0 410.5,207.0 412.5,334.0 415.7,334.0 418.8,333.8 422.0,334.0 424.5,208.5 427.6,208.4 430.8,208.6 433.9,208.3 437.1,208.8 440.2,208.3 443.4,208.8 446.5,208.4 449.7,208.8 452.8,208.6 456.0,208.5 459.1,208.5 462.3,208.6 465.4,208.6 468.6,208.4 471.7,208.3 474.9,208.5 478.0,208.5 481.5,206.3 485.0,208.5 488.2,208.8 491.3,208.6 494.5,208.5 497.5,334.0 500.0,208.9 503.2,208.6 506.5,209.1 509.7,209.0 512.9,209.1 516.1,208.6 519.4,209.0 522.6,208.5 525.8,208.9 529.0,208.7 532.3,208.6 535.5,209.1 538.7,208.5 541.9,208.8 545.2,209.0 548.4,208.6 551.6,208.5 554.8,209.0 558.1,208.7 561.3,208.9 564.5,208.4 567.7,208.6 571.0,208.5 574.2,208.8 577.4,208.4 580.6,209.0 583.9,208.3 587.1,208.8 590.3,208.3 593.5,208.4 596.8,208.8 600.0,208.6 603.2,208.3 606.4,208.3 609.6,208.7 612.9,208.4 616.1,208.2 619.3,208.8 622.5,208.2 625.7,208.1 628.9,208.3 632.1,208.5 635.4,208.5 638.6,208.1 641.8,208.2 645.0,208.0 648.2,208.2 651.4,208.4 654.6,208.4 657.9,208.5 661.1,208.4 664.3,208.4 667.5,208.3 670.7,208.1 673.9,207.9 677.1,208.2 680.4,207.9 683.6,207.8 686.8,208.0 690.0,208.0 693.1,208.3 696.3,207.7 699.5,208.0 702.6,207.9 705.8,208.0 708.9,207.7 712.0,208.3 715.2,207.8 718.4,208.0 721.5,207.8 724.6,207.6 727.8,207.9 731.0,207.6 734.1,207.5 737.2,207.5 740.4,207.6 743.5,207.5 746.7,207.9 749.9,207.8 753.0,207.8" fill="none" stroke="#00f4f4" stroke-width="3.3" stroke-linejoin="round" stroke-linecap="round" />
<line x1="137" y1="332.3" x2="753" y2="332.3" stroke="#c87800" stroke-width="1"/>
<line x1="138" y1="334.6" x2="752" y2="334.6" stroke="#ff0000" stroke-width="3.9" stroke-linecap="round"/>
</svg>

<!-- ===== legend ===== -->
<div class="abs" style="left:822px;top:103px;width:198px;height:274px;box-sizing:border-box;background:#f0f0f0;border:1px solid;border-color:#7a7a7a #fff #fff #7a7a7a"></div>
<div class="abs" style="left:823px;top:104px;width:196px;height:11.5px;box-sizing:border-box;background:#f0f0f0;border-bottom:1px solid #8a8a8a"></div>
<div class="abs" style="left:837px;top:104px;width:1px;height:11px;background:#8a8a8a"></div><div class="abs" style="left:838px;top:104px;width:1px;height:11px;background:#fff"></div>
<div class="abs" style="left:879px;top:104px;width:1px;height:11px;background:#8a8a8a"></div><div class="abs" style="left:880px;top:104px;width:1px;height:11px;background:#fff"></div>
<div class="abs" style="left:931px;top:104px;width:1px;height:11px;background:#8a8a8a"></div><div class="abs" style="left:932px;top:104px;width:1px;height:11px;background:#fff"></div>
<div class="abs" style="left:1018px;top:104px;width:1px;height:11px;background:#8a8a8a"></div>
<div class="abs lt" style="left:838px;top:105.3px;width:42px">Variável</div>
<div class="abs lt" style="left:880px;top:105.3px;width:52px">Valor</div>
<div class="abs lt" style="left:932px;top:105.3px;width:87px">Data e Hora</div>
<div class="abs sw" style="left:827px;top:119.1px;background:#808000"></div>
<div class="abs lt" style="left:837px;top:117.5px;width:42px">Nível (m)</div>
<div class="abs lt" style="left:879px;top:117.5px;width:52px;color:#808080">-</div>
<div class="abs lt" style="left:931px;top:117.5px;width:88px;color:#808080">-</div>
<div class="abs sw" style="left:827px;top:130.3px;background:#ff00ff"></div>
<div class="abs lt" style="left:837px;top:128.7px;width:42px">Nível (%)</div>
<div class="abs lt" style="left:879px;top:128.7px;width:52px;color:#808080">-</div>
<div class="abs lt" style="left:931px;top:128.7px;width:88px;color:#808080">-</div>
<div class="abs sw" style="left:827px;top:141.6px;background:#ff0000"></div>
<div class="abs lt" style="left:837px;top:140.0px;width:42px">Q1 (m3/h)</div>
<div class="abs lt" style="left:879px;top:140.0px;width:52px;color:#808080">-</div>
<div class="abs lt" style="left:931px;top:140.0px;width:88px;color:#808080">-</div>
<div class="abs sw" style="left:827px;top:152.8px;background:#0000ff"></div>
<div class="abs lt" style="left:837px;top:151.2px;width:42px">PR (mca)</div>
<div class="abs lt" style="left:879px;top:151.2px;width:52px;color:#808080">-</div>
<div class="abs lt" style="left:931px;top:151.2px;width:88px;color:#808080">-</div>
<div class="abs sw" style="left:827px;top:164.0px;background:#808000"></div>
<div class="abs lt" style="left:837px;top:162.4px;width:42px">VR (V)</div>
<div class="abs lt" style="left:879px;top:162.4px;width:52px;color:#808080">-</div>
<div class="abs lt" style="left:931px;top:162.4px;width:88px;color:#808080">-</div>
<div class="abs sw" style="left:827px;top:175.3px;background:#00ff00"></div>
<div class="abs lt" style="left:837px;top:173.7px;width:42px">VS (V)</div>
<div class="abs lt" style="left:879px;top:173.7px;width:52px;color:#808080">-</div>
<div class="abs lt" style="left:931px;top:173.7px;width:88px;color:#808080">-</div>
<div class="abs sw" style="left:827px;top:186.5px;background:#c0c0c0"></div>
<div class="abs lt" style="left:837px;top:184.9px;width:42px">VT (V)</div>
<div class="abs lt" style="left:879px;top:184.9px;width:52px;color:#808080">-</div>
<div class="abs lt" style="left:931px;top:184.9px;width:88px;color:#808080">-</div>
<div class="abs sw" style="left:827px;top:197.7px;background:#008000"></div>
<div class="abs lt" style="left:837px;top:196.1px;width:42px">IR (A)</div>
<div class="abs lt" style="left:879px;top:196.1px;width:52px;color:#808080">-</div>
<div class="abs lt" style="left:931px;top:196.1px;width:88px;color:#808080">-</div>
<div class="abs sw" style="left:827px;top:208.9px;background:#800000"></div>
<div class="abs lt" style="left:837px;top:207.3px;width:42px">IS (A)</div>
<div class="abs lt" style="left:879px;top:207.3px;width:52px;color:#808080">-</div>
<div class="abs lt" style="left:931px;top:207.3px;width:88px;color:#808080">-</div>
<div class="abs sw" style="left:827px;top:220.2px;background:#00ffff"></div>
<div class="abs lt" style="left:837px;top:218.6px;width:42px">IT (A)</div>
<div class="abs lt" style="left:879px;top:218.6px;width:52px;color:#808080">-</div>
<div class="abs lt" style="left:931px;top:218.6px;width:88px;color:#808080">-</div>
<div class="abs sw" style="left:827px;top:231.4px;background:#ff0000"></div>
<div class="abs lt" style="left:837px;top:229.8px;width:42px">BLOQ C...</div>
<div class="abs lt" style="left:879px;top:229.8px;width:52px;color:#808080">-</div>
<div class="abs lt" style="left:931px;top:229.8px;width:88px;color:#808080">-</div>
<div class="abs sw" style="left:827px;top:242.6px;background:#0000ff"></div>
<div class="abs lt" style="left:837px;top:241.0px;width:42px">MB01 P</div>
<div class="abs lt" style="left:879px;top:241.0px;width:52px;color:#808080">-</div>
<div class="abs lt" style="left:931px;top:241.0px;width:88px;color:#808080">-</div>
<div class="abs sw" style="left:827px;top:253.9px;background:#800000"></div>
<div class="abs lt" style="left:837px;top:252.3px;width:42px">BLOQ C...</div>
<div class="abs lt" style="left:879px;top:252.3px;width:52px;color:#808080">-</div>
<div class="abs lt" style="left:931px;top:252.3px;width:88px;color:#808080">-</div>
<div class="abs sw" style="left:827px;top:265.1px;background:#ffff00"></div>
<div class="abs lt" style="left:837px;top:263.5px;width:42px">MB01 R</div>
<div class="abs lt" style="left:879px;top:263.5px;width:52px;color:#808080">-</div>
<div class="abs lt" style="left:931px;top:263.5px;width:88px;color:#808080">-</div>
<div class="abs sw" style="left:827px;top:276.3px;background:#ff0000"></div>
<div class="abs lt" style="left:837px;top:274.7px;width:42px">MB02 R</div>
<div class="abs lt" style="left:879px;top:274.7px;width:52px;color:#808080">-</div>
<div class="abs lt" style="left:931px;top:274.7px;width:88px;color:#808080">-</div>
<div class="abs" style="left:922px;top:385px;width:68px;height:18px;box-sizing:border-box;background:#f0f0f0;border:1px solid;border-color:#fff #6a6a6a #6a6a6a #fff;box-shadow:inset -1px -1px 0 #a8a8a8;text-align:center;font-size:8px;font-weight:bold;color:#222;line-height:17.5px;white-space:nowrap">Apaga Penas</div>

<!-- ===== checkboxes ===== -->
<div class="abs cb" style="left:136px;top:384px"><svg width="8" height="8" viewBox="0 0 8 8"><path d="M2.4 3.8 L3.6 5.2 L5.8 2.6" fill="none" stroke="#333" stroke-width="1"/></svg></div>
<div class="abs cl" style="left:131.0px;top:382.3px">Nível (m)</div>
<div class="abs cb" style="left:203px;top:384px"><svg width="8" height="8" viewBox="0 0 8 8"><path d="M2.4 3.8 L3.6 5.2 L5.8 2.6" fill="none" stroke="#333" stroke-width="1"/></svg></div>
<div class="abs cl" style="left:197.5px;top:382.3px">Nível (%)</div>
<div class="abs cb" style="left:270px;top:384px"><svg width="8" height="8" viewBox="0 0 8 8"><path d="M2.4 3.8 L3.6 5.2 L5.8 2.6" fill="none" stroke="#333" stroke-width="1"/></svg></div>
<div class="abs cl" style="left:265.0px;top:382.3px">Q1 (m3/h)</div>
<div class="abs cb" style="left:338px;top:384px"><svg width="8" height="8" viewBox="0 0 8 8"><path d="M2.4 3.8 L3.6 5.2 L5.8 2.6" fill="none" stroke="#333" stroke-width="1"/></svg></div>
<div class="abs cl" style="left:332.6px;top:382.3px">PR (mca)</div>
<div class="abs cb" style="left:406px;top:384px"><svg width="8" height="8" viewBox="0 0 8 8"><path d="M2.4 3.8 L3.6 5.2 L5.8 2.6" fill="none" stroke="#333" stroke-width="1"/></svg></div>
<div class="abs cl" style="left:400.2px;top:382.3px">VR (V)</div>
<div class="abs cb" style="left:473px;top:384px"><svg width="8" height="8" viewBox="0 0 8 8"><path d="M2.4 3.8 L3.6 5.2 L5.8 2.6" fill="none" stroke="#333" stroke-width="1"/></svg></div>
<div class="abs cl" style="left:467.7px;top:382.3px">VS (V)</div>
<div class="abs cb" style="left:540px;top:384px"><svg width="8" height="8" viewBox="0 0 8 8"><path d="M2.4 3.8 L3.6 5.2 L5.8 2.6" fill="none" stroke="#333" stroke-width="1"/></svg></div>
<div class="abs cl" style="left:535.0px;top:382.3px">VT (V)</div>
<div class="abs cb" style="left:608px;top:384px"><svg width="8" height="8" viewBox="0 0 8 8"><path d="M2.4 3.8 L3.6 5.2 L5.8 2.6" fill="none" stroke="#333" stroke-width="1"/></svg></div>
<div class="abs cl" style="left:601.6px;top:382.3px">IR (A)</div>
<div class="abs cb" style="left:675px;top:384px"><svg width="8" height="8" viewBox="0 0 8 8"><path d="M2.4 3.8 L3.6 5.2 L5.8 2.6" fill="none" stroke="#333" stroke-width="1"/></svg></div>
<div class="abs cl" style="left:669.0px;top:382.3px">IS (A)</div>
<div class="abs cb" style="left:136px;top:403px"><svg width="8" height="8" viewBox="0 0 8 8"><path d="M2.4 3.8 L3.6 5.2 L5.8 2.6" fill="none" stroke="#333" stroke-width="1"/></svg></div>
<div class="abs cl" style="left:130.3px;top:401.7px">IT (A)</div>
<div class="abs cb" style="left:203px;top:403px"><svg width="8" height="8" viewBox="0 0 8 8"><path d="M2.4 3.8 L3.6 5.2 L5.8 2.6" fill="none" stroke="#333" stroke-width="1"/></svg></div>
<div class="abs cl" style="left:197.5px;top:401.7px">IT (A)</div>
<div class="abs cb" style="left:270px;top:403px"><svg width="8" height="8" viewBox="0 0 8 8"><path d="M2.4 3.8 L3.6 5.2 L5.8 2.6" fill="none" stroke="#333" stroke-width="1"/></svg></div>
<div class="abs cl" style="left:278.0px;top:401.7px">BLOQ CCO P</div>
<div class="abs cb" style="left:372px;top:403px"><svg width="8" height="8" viewBox="0 0 8 8"><path d="M2.4 3.8 L3.6 5.2 L5.8 2.6" fill="none" stroke="#333" stroke-width="1"/></svg></div>
<div class="abs cl" style="left:366.8px;top:401.7px">MB01 P</div>
<div class="abs cb" style="left:447px;top:403px"><svg width="8" height="8" viewBox="0 0 8 8"><path d="M2.4 3.8 L3.6 5.2 L5.8 2.6" fill="none" stroke="#333" stroke-width="1"/></svg></div>
<div class="abs cl" style="left:454.7px;top:401.7px">BLOQ CCO R</div>
<div class="abs cb" style="left:540px;top:403px"><svg width="8" height="8" viewBox="0 0 8 8"><path d="M2.4 3.8 L3.6 5.2 L5.8 2.6" fill="none" stroke="#333" stroke-width="1"/></svg></div>
<div class="abs cl" style="left:534.3px;top:401.7px">MB01 R</div>
<div class="abs cb" style="left:608px;top:403px"><svg width="8" height="8" viewBox="0 0 8 8"><path d="M2.4 3.8 L3.6 5.2 L5.8 2.6" fill="none" stroke="#333" stroke-width="1"/></svg></div>
<div class="abs cl" style="left:602.4px;top:401.7px">MB01 R</div>

<!-- ===== data table ===== -->
<div class="abs" style="left:0;top:419px;width:1024px;height:77.5px;background:#fff"></div>
<div class="abs" style="left:0;top:419px;width:1010.5px;height:15.5px;background:#ece9d8;border-top:1px solid #7a7a72;border-bottom:1px solid #b8b4a0;box-sizing:border-box"></div>
<div class="abs" style="left:0;top:419px;width:30.5px;height:77.5px;background:#ece9d8;border-right:1px solid #8a8678;box-sizing:border-box"></div>
<div class="abs" style="left:0;top:448.8px;width:1010.5px;height:1px;background:#d4d4d4"></div>
<div class="abs" style="left:0;top:448.8px;width:30px;height:1px;background:#a8a494"></div>
<div class="abs" style="left:0;top:463.7px;width:1010.5px;height:1px;background:#d4d4d4"></div>
<div class="abs" style="left:0;top:463.7px;width:30px;height:1px;background:#a8a494"></div>
<div class="abs" style="left:0;top:478.6px;width:1010.5px;height:1px;background:#d4d4d4"></div>
<div class="abs" style="left:0;top:478.6px;width:30px;height:1px;background:#a8a494"></div>
<div class="abs" style="left:0;top:493.5px;width:1010.5px;height:1px;background:#d4d4d4"></div>
<div class="abs" style="left:0;top:493.5px;width:30px;height:1px;background:#a8a494"></div>
<div class="abs th" style="left:33.9px;top:421.8px;width:116.2px">Data e Hora</div>
<div class="abs" style="left:142.5px;top:420px;width:1px;height:14px;background:#a8a494"></div>
<div class="abs" style="left:143.5px;top:420px;width:1px;height:14px;background:#fff"></div>
<div class="abs" style="left:142.5px;top:434.5px;width:1px;height:62px;background:#d4d4d4"></div>
<div class="abs th" style="left:146.4px;top:421.8px;width:67.5px">Nível (m)</div>
<div class="abs" style="left:209.9px;top:420px;width:1px;height:14px;background:#a8a494"></div>
<div class="abs" style="left:210.9px;top:420px;width:1px;height:14px;background:#fff"></div>
<div class="abs" style="left:209.9px;top:434.5px;width:1px;height:62px;background:#d4d4d4"></div>
<div class="abs th" style="left:213.8px;top:421.8px;width:67.5px">Nível (%)</div>
<div class="abs" style="left:277.3px;top:420px;width:1px;height:14px;background:#a8a494"></div>
<div class="abs" style="left:278.3px;top:420px;width:1px;height:14px;background:#fff"></div>
<div class="abs" style="left:277.3px;top:434.5px;width:1px;height:62px;background:#d4d4d4"></div>
<div class="abs th" style="left:281.2px;top:421.8px;width:67.5px">Q1 (m3/h)</div>
<div class="abs" style="left:344.7px;top:420px;width:1px;height:14px;background:#a8a494"></div>
<div class="abs" style="left:345.7px;top:420px;width:1px;height:14px;background:#fff"></div>
<div class="abs" style="left:344.7px;top:434.5px;width:1px;height:62px;background:#d4d4d4"></div>
<div class="abs th" style="left:348.6px;top:421.8px;width:67.5px">Tot1 (m3)</div>
<div class="abs" style="left:412.1px;top:420px;width:1px;height:14px;background:#a8a494"></div>
<div class="abs" style="left:413.1px;top:420px;width:1px;height:14px;background:#fff"></div>
<div class="abs" style="left:412.1px;top:434.5px;width:1px;height:62px;background:#d4d4d4"></div>
<div class="abs th" style="left:416.0px;top:421.8px;width:67.5px">PR (mca)</div>
<div class="abs" style="left:479.5px;top:420px;width:1px;height:14px;background:#a8a494"></div>
<div class="abs" style="left:480.5px;top:420px;width:1px;height:14px;background:#fff"></div>
<div class="abs" style="left:479.5px;top:434.5px;width:1px;height:62px;background:#d4d4d4"></div>
<div class="abs th" style="left:483.4px;top:421.8px;width:67.5px">VR (V)</div>
<div class="abs" style="left:546.9px;top:420px;width:1px;height:14px;background:#a8a494"></div>
<div class="abs" style="left:547.9px;top:420px;width:1px;height:14px;background:#fff"></div>
<div class="abs" style="left:546.9px;top:434.5px;width:1px;height:62px;background:#d4d4d4"></div>
<div class="abs th" style="left:550.8px;top:421.8px;width:67.5px">VS (V)</div>
<div class="abs" style="left:614.3px;top:420px;width:1px;height:14px;background:#a8a494"></div>
<div class="abs" style="left:615.3px;top:420px;width:1px;height:14px;background:#fff"></div>
<div class="abs" style="left:614.3px;top:434.5px;width:1px;height:62px;background:#d4d4d4"></div>
<div class="abs th" style="left:618.2px;top:421.8px;width:67.5px">VT (V)</div>
<div class="abs" style="left:681.7px;top:420px;width:1px;height:14px;background:#a8a494"></div>
<div class="abs" style="left:682.7px;top:420px;width:1px;height:14px;background:#fff"></div>
<div class="abs" style="left:681.7px;top:434.5px;width:1px;height:62px;background:#d4d4d4"></div>
<div class="abs th" style="left:685.6px;top:421.8px;width:67.5px">IR (A)</div>
<div class="abs" style="left:749.1px;top:420px;width:1px;height:14px;background:#a8a494"></div>
<div class="abs" style="left:750.1px;top:420px;width:1px;height:14px;background:#fff"></div>
<div class="abs" style="left:749.1px;top:434.5px;width:1px;height:62px;background:#d4d4d4"></div>
<div class="abs th" style="left:753.0px;top:421.8px;width:67.5px">IS (A)</div>
<div class="abs" style="left:816.5px;top:420px;width:1px;height:14px;background:#a8a494"></div>
<div class="abs" style="left:817.5px;top:420px;width:1px;height:14px;background:#fff"></div>
<div class="abs" style="left:816.5px;top:434.5px;width:1px;height:62px;background:#d4d4d4"></div>
<div class="abs th" style="left:820.4px;top:421.8px;width:67.5px">IT (A)</div>
<div class="abs" style="left:883.9px;top:420px;width:1px;height:14px;background:#a8a494"></div>
<div class="abs" style="left:884.9px;top:420px;width:1px;height:14px;background:#fff"></div>
<div class="abs" style="left:883.9px;top:434.5px;width:1px;height:62px;background:#d4d4d4"></div>
<div class="abs th" style="left:887.8px;top:421.8px;width:67.5px">COS</div>
<div class="abs" style="left:951.3px;top:420px;width:1px;height:14px;background:#a8a494"></div>
<div class="abs" style="left:952.3px;top:420px;width:1px;height:14px;background:#fff"></div>
<div class="abs" style="left:951.3px;top:434.5px;width:1px;height:62px;background:#d4d4d4"></div>
<div class="abs th" style="left:955.2px;top:421.8px;width:58.1px">BLOQ C...</div>
<div class="abs" style="left:1010.0px;top:420px;width:1px;height:14px;background:#a8a494"></div>
<div class="abs" style="left:1011.0px;top:420px;width:1px;height:14px;background:#fff"></div>
<div class="abs" style="left:1010.0px;top:434.5px;width:1px;height:62px;background:#d4d4d4"></div>
<div class="abs" style="left:32px;top:436px;width:109.5px;height:12.5px;background:#3399ff"></div>
<div class="abs td" style="left:33.8px;top:436.5px;color:#fff">03/02/2018 16:18:14</div>
<div class="abs td" style="left:146.3px;top:436.5px">1,45</div>
<div class="abs td" style="left:213.7px;top:436.5px">58,00</div>
<div class="abs td" style="left:281.1px;top:436.5px">195,25</div>
<div class="abs td" style="left:348.5px;top:436.5px">0</div>
<div class="abs td" style="left:415.9px;top:436.5px">0,00</div>
<div class="abs td" style="left:483.3px;top:436.5px">453,1</div>
<div class="abs td" style="left:550.7px;top:436.5px">453,3</div>
<div class="abs td" style="left:618.1px;top:436.5px">452,8</div>
<div class="abs td" style="left:685.5px;top:436.5px">276,2</div>
<div class="abs td" style="left:752.9px;top:436.5px">284,8</div>
<div class="abs td" style="left:820.3px;top:436.5px">285,9</div>
<div class="abs td" style="left:887.7px;top:436.5px">0,834</div>
<div class="abs td" style="left:955.1px;top:436.5px">0</div>
<div class="abs td" style="left:33.8px;top:451.4px">03/02/2018 16:13:14</div>
<div class="abs td" style="left:146.3px;top:451.4px">1,44</div>
<div class="abs td" style="left:213.7px;top:451.4px">57,60</div>
<div class="abs td" style="left:281.1px;top:451.4px">195,25</div>
<div class="abs td" style="left:348.5px;top:451.4px">0</div>
<div class="abs td" style="left:415.9px;top:451.4px">0,00</div>
<div class="abs td" style="left:483.3px;top:451.4px">454,0</div>
<div class="abs td" style="left:550.7px;top:451.4px">453,7</div>
<div class="abs td" style="left:618.1px;top:451.4px">453,3</div>
<div class="abs td" style="left:685.5px;top:451.4px">276,0</div>
<div class="abs td" style="left:752.9px;top:451.4px">284,0</div>
<div class="abs td" style="left:820.3px;top:451.4px">284,6</div>
<div class="abs td" style="left:887.7px;top:451.4px">0,833</div>
<div class="abs td" style="left:955.1px;top:451.4px">0</div>
<div class="abs td" style="left:33.8px;top:466.3px">03/02/2018 16:08:14</div>
<div class="abs td" style="left:146.3px;top:466.3px">1,43</div>
<div class="abs td" style="left:213.7px;top:466.3px">57,20</div>
<div class="abs td" style="left:281.1px;top:466.3px">195,80</div>
<div class="abs td" style="left:348.5px;top:466.3px">0</div>
<div class="abs td" style="left:415.9px;top:466.3px">0,00</div>
<div class="abs td" style="left:483.3px;top:466.3px">459,5</div>
<div class="abs td" style="left:550.7px;top:466.3px">459,4</div>
<div class="abs td" style="left:618.1px;top:466.3px">459,0</div>
<div class="abs td" style="left:685.5px;top:466.3px">273,9</div>
<div class="abs td" style="left:752.9px;top:466.3px">283,2</div>
<div class="abs td" style="left:820.3px;top:466.3px">283,7</div>
<div class="abs td" style="left:887.7px;top:466.3px">0,827</div>
<div class="abs td" style="left:955.1px;top:466.3px">0</div>
<div class="abs td" style="left:33.8px;top:481.2px">03/02/2018 16:03:14</div>
<div class="abs td" style="left:146.3px;top:481.2px">1,42</div>
<div class="abs td" style="left:213.7px;top:481.2px">56,80</div>
<div class="abs td" style="left:281.1px;top:481.2px">196,35</div>
<div class="abs td" style="left:348.5px;top:481.2px">0</div>
<div class="abs td" style="left:415.9px;top:481.2px">0,00</div>
<div class="abs td" style="left:483.3px;top:481.2px">459,7</div>
<div class="abs td" style="left:550.7px;top:481.2px">459,5</div>
<div class="abs td" style="left:618.1px;top:481.2px">459,1</div>
<div class="abs td" style="left:685.5px;top:481.2px">274,2</div>
<div class="abs td" style="left:752.9px;top:481.2px">283,2</div>
<div class="abs td" style="left:820.3px;top:481.2px">284,4</div>
<div class="abs td" style="left:887.7px;top:481.2px">0,828</div>
<div class="abs td" style="left:955.1px;top:481.2px">0</div>
<svg class="abs" style="left:12px;top:438px" width="6" height="8" viewBox="0 0 6 8"><path d="M1 0.5 L5 4 L1 7.5 Z" fill="#000"/></svg>
<div class="abs" style="left:0;top:434.5px;width:1px;height:15px;background:#555"></div><div class="abs" style="left:30.5px;top:419px;width:112.5px;height:1px;background:#4a4a44"></div><div class="abs" style="left:30px;top:419px;width:1px;height:15.5px;background:#4a4a44"></div>
<div class="abs" style="left:1010.5px;top:419px;width:13.5px;height:77.5px;background:#fff;border-left:1px solid #e0e0e0;box-sizing:border-box"></div>
<div class="abs" style="left:1011.5px;top:433.5px;width:11.5px;height:11.5px;background:#d6d6d6"></div>
<svg class="abs" style="left:1013px;top:423px" width="9" height="6" viewBox="0 0 9 6"><path d="M1 5 L4.5 1.5 L8 5" fill="none" stroke="#606060" stroke-width="0.9"/></svg>

<!-- ===== alarms ===== -->
<div class="abs" style="left:0;top:496.5px;width:1024px;height:11.5px;background:#f0f0f0"></div>
<div class="abs" style="left:0;top:508px;width:1024px;height:37px;background:#000"></div>
<div class="abs ah" style="left:4.5px;top:497px">DataHora</div>
<div class="abs" style="left:111.5px;top:497px;width:1px;height:10.5px;background:#9a9a9a"></div>
<div class="abs" style="left:112.5px;top:497px;width:1px;height:10.5px;background:#fff"></div>
<div class="abs ah" style="left:117.0px;top:497px">Operador</div>
<div class="abs" style="left:223.0px;top:497px;width:1px;height:10.5px;background:#9a9a9a"></div>
<div class="abs" style="left:224.0px;top:497px;width:1px;height:10.5px;background:#fff"></div>
<div class="abs ah" style="left:228.5px;top:497px">Área</div>
<div class="abs" style="left:335.5px;top:497px;width:1px;height:10.5px;background:#9a9a9a"></div>
<div class="abs" style="left:336.5px;top:497px;width:1px;height:10.5px;background:#fff"></div>
<div class="abs ah" style="left:341.0px;top:497px">Condição Ativa</div>
<div class="abs" style="left:411.5px;top:497px;width:1px;height:10.5px;background:#9a9a9a"></div>
<div class="abs" style="left:412.5px;top:497px;width:1px;height:10.5px;background:#fff"></div>
<div class="abs ah" style="left:417.0px;top:497px">Mensagem</div>
<div class="abs" style="left:755.0px;top:497px;width:1px;height:10.5px;background:#9a9a9a"></div>
<div class="abs" style="left:756.0px;top:497px;width:1px;height:10.5px;background:#fff"></div>
<div class="abs ah" style="left:760.5px;top:497px">Valor</div>
<div class="abs" style="left:815.5px;top:497px;width:1px;height:10.5px;background:#9a9a9a"></div>
<div class="abs" style="left:816.5px;top:497px;width:1px;height:10.5px;background:#fff"></div>
<svg class="abs" style="left:0.8px;top:511.4px" width="10" height="9" viewBox="0 0 9 9" preserveAspectRatio="none"><path d="M4.5 0.3 C2.6 0.3 2.2 2 2.2 3.6 C2.2 5.2 1 5.8 0.4 6.8 L8.6 6.8 C8 5.8 6.8 5.2 6.8 3.6 C6.8 2 6.4 0.3 4.5 0.3 Z M3.4 7.4 L5.6 7.4 L5.6 8.4 L3.4 8.4 Z" fill="#ff1010"/></svg>
<div class="abs ar" style="left:12.3px;top:509.6px"><span class="sq">03/02/2018 16:21:21</span></div>
<div class="abs ar" style="left:224.5px;top:509.6px"><span class="sq">Unidade 26</span></div>
<div class="abs ar" style="left:337.5px;top:509.6px"><span class="sq">Sim</span></div>
<div class="abs ar" style="left:412.5px;top:509.6px"><span class="sq">Falha de comunicação</span></div>
<div class="abs ar" style="left:757.5px;top:509.6px"><span class="sq">300</span></div>
<svg class="abs" style="left:0.8px;top:520.9px" width="10" height="9" viewBox="0 0 9 9" preserveAspectRatio="none"><path d="M4.5 0.3 C2.6 0.3 2.2 2 2.2 3.6 C2.2 5.2 1 5.8 0.4 6.8 L8.6 6.8 C8 5.8 6.8 5.2 6.8 3.6 C6.8 2 6.4 0.3 4.5 0.3 Z M3.4 7.4 L5.6 7.4 L5.6 8.4 L3.4 8.4 Z" fill="#ff1010"/></svg>
<div class="abs ar" style="left:12.3px;top:519.1px"><span class="sq">03/02/2018 16:21:19</span></div>
<div class="abs ar" style="left:224.5px;top:519.1px"><span class="sq">Unidade 45</span></div>
<div class="abs ar" style="left:337.5px;top:519.1px"><span class="sq">Sim</span></div>
<div class="abs ar" style="left:412.5px;top:519.1px"><span class="sq">Falha de comunicação</span></div>
<div class="abs ar" style="left:757.5px;top:519.1px"><span class="sq">300</span></div>
<svg class="abs" style="left:0.8px;top:530.4px" width="10" height="9" viewBox="0 0 9 9" preserveAspectRatio="none"><path d="M4.5 0.3 C2.6 0.3 2.2 2 2.2 3.6 C2.2 5.2 1 5.8 0.4 6.8 L8.6 6.8 C8 5.8 6.8 5.2 6.8 3.6 C6.8 2 6.4 0.3 4.5 0.3 Z M3.4 7.4 L5.6 7.4 L5.6 8.4 L3.4 8.4 Z" fill="#ff1010"/></svg>
<div class="abs ar" style="left:12.3px;top:528.6px"><span class="sq">03/02/2018 16:21:14</span></div>
<div class="abs ar" style="left:224.5px;top:528.6px"><span class="sq">Unidade 35</span></div>
<div class="abs ar" style="left:337.5px;top:528.6px"><span class="sq">Sim</span></div>
<div class="abs ar" style="left:412.5px;top:528.6px"><span class="sq">Falha de comunicação</span></div>
<div class="abs ar" style="left:757.5px;top:528.6px"><span class="sq">300</span></div>
<svg class="abs" style="left:0.8px;top:539.9px" width="10" height="9" viewBox="0 0 9 9" preserveAspectRatio="none"><path d="M4.5 0.3 C2.6 0.3 2.2 2 2.2 3.6 C2.2 5.2 1 5.8 0.4 6.8 L8.6 6.8 C8 5.8 6.8 5.2 6.8 3.6 C6.8 2 6.4 0.3 4.5 0.3 Z M3.4 7.4 L5.6 7.4 L5.6 8.4 L3.4 8.4 Z" fill="#ff1010"/></svg>
<div class="abs ar" style="left:12.3px;top:538.1px"><span class="sq">03/02/2018 16:21:13</span></div>
<div class="abs ar" style="left:224.5px;top:538.1px"><span class="sq">Unidade 22</span></div>
<div class="abs ar" style="left:337.5px;top:538.1px"><span class="sq">Sim</span></div>
<div class="abs ar" style="left:412.5px;top:538.1px"><span class="sq">Falha de comunicação</span></div>
<div class="abs ar" style="left:757.5px;top:538.1px"><span class="sq">300</span></div>
<div class="abs" style="left:1010.5px;top:496.5px;width:13.5px;height:48.5px;background:#fff"></div>
<div class="abs" style="left:1011.5px;top:509px;width:11.5px;height:11.5px;background:#d6d6d6"></div>
<svg class="abs" style="left:1013px;top:500px" width="9" height="6" viewBox="0 0 9 6"><path d="M1 5 L4.5 1.5 L8 5" fill="none" stroke="#606060" stroke-width="0.9"/></svg>
<svg class="abs" style="left:1013px;top:535px" width="9" height="6" viewBox="0 0 9 6"><path d="M1 1 L4.5 4.5 L8 1" fill="none" stroke="#606060" stroke-width="0.9"/></svg>

<!-- ===== taskbar ===== -->
<div class="abs" style="left:0;top:545px;width:1024px;height:30px;background:#62c8e8"></div>
<div class="abs" style="left:12.500px;top:545px;width:185.500px;height:30px;background:#70cdea"></div>
<div class="abs" style="left:198px;top:545px;width:44.500px;height:30px;background:#a2dcf0"></div>
<div class="abs" style="left:0;top:574px;width:1024px;height:1px;background:#3f7f95"></div>
<div class="abs tbsep" style="left:12px"></div><div class="abs tbsep" style="left:56px"></div><div class="abs tbsep" style="left:105px"></div><div class="abs tbsep" style="left:149.5px"></div><div class="abs tbsep" style="left:197.5px"></div><div class="abs tbsep" style="left:242.5px"></div>
<svg class="abs" style="left:0;top:545px" width="1024" height="30" viewBox="0 545 1024 30">
<defs>
  <linearGradient id="ps" x1="0" y1="0" x2="1" y2="1"><stop offset="0" stop-color="#4a90d8"/><stop offset="1" stop-color="#1a4a98"/></linearGradient>
  <linearGradient id="fold" x1="0" y1="0" x2="0" y2="1"><stop offset="0" stop-color="#fbe9a0"/><stop offset="1" stop-color="#e8c458"/></linearGradient>
</defs>
<!-- server manager -->
<rect x="23.500" y="548.500" width="9.500" height="21.500" rx="0.800" fill="#2a7ad8" stroke="#e8f4ff" stroke-width="1"/>
<rect x="25.500" y="552" width="5.500" height="1.200" fill="#9cd0ff"/>
<rect x="27" y="560.500" width="19.500" height="10.500" rx="1" fill="#6a7c8c" stroke="#f0f4f8" stroke-width="1"/>
<path d="M33 560.500 V558.500 H40.500 V560.500" fill="none" stroke="#f0f4f8" stroke-width="1.200"/>
<rect x="27.500" y="564.500" width="18.500" height="1" fill="#c8d4dc"/>
<!-- powershell -->
<path d="M75 553 H92 L88.500 568 H71.500 Z" fill="url(#ps)" stroke="#8ac0f0" stroke-width="0.800"/>
<path d="M77.500 556.500 L83.500 560.500 L76.500 564.800" fill="none" stroke="#fff" stroke-width="1.800" stroke-linejoin="round"/>
<path d="M82.500 565.300 H87.500" stroke="#fff" stroke-width="1.600"/>
<!-- explorer -->
<path d="M116 552.500 H124 L126 554.500 H139 V569 H116 Z" fill="#e8c050"/>
<rect x="117.500" y="551.800" width="3" height="1.500" fill="#40b040"/><rect x="130" y="553.500" width="3" height="1.500" fill="#d84040"/>
<path d="M116 556.500 H139.500 V570 H116 Z" fill="url(#fold)"/>
<rect x="120.500" y="562.500" width="14.500" height="6" rx="0.800" fill="#5aa8e8" stroke="#f4faff" stroke-width="1"/>
<rect x="123" y="566.500" width="9.500" height="3.500" fill="#fff"/>
<!-- chrome -->
<circle cx="174" cy="560" r="11.200" fill="#e8453c"/>
<path d="M174 560 L164.300 554.400 A11.200 11.200 0 0 0 174.800 571.200 L179.500 563.200 Z" fill="#2da94f"/>
<path d="M174 560 L179.600 563.200 L174.800 571.200 A11.200 11.200 0 0 0 183.700 554.400 L174 554.400 Z" fill="#fdd23e"/>
<circle cx="174" cy="560" r="5.200" fill="#fff"/>
<circle cx="174" cy="560" r="4.100" fill="#4a8af4"/>
<!-- e3 viewer -->
<path d="M225.500 548 L227.600 554 L232.800 554.300 L228.800 557.800 L230.300 564 L225.500 560.800" fill="#9cc8f4" stroke="#4f93e6" stroke-width="1"/>
<rect x="208.800" y="553.500" width="17.200" height="14" fill="#e8e8e8" stroke="#9a9a9a" stroke-width="0.800"/>
<rect x="210.800" y="555.500" width="13.200" height="10" fill="#5a6c98"/>
<path d="M210.800 555.500 H224 V559 L210.800 563 Z" fill="#8c9cc4"/>
<path d="M212 563.500 L219.500 557 L221 560.500 Z" fill="#28386c"/>
<rect x="214.800" y="568" width="5" height="1.800" fill="#555"/>
<rect x="211.800" y="569.800" width="11" height="1.700" rx="0.800" fill="#2a2a2a"/>
<!-- tray -->
<path d="M866.800 560.800 L869.300 557.800 L871.800 560.800 Z" fill="#222"/>
<path d="M882.500 555 V566" stroke="#555" stroke-width="1"/>
<path d="M883 555 H890 V560.500 H883 Z" fill="#f4f4f4" stroke="#777" stroke-width="0.600"/>
<circle cx="890" cy="563.300" r="3" fill="#e02020"/><path d="M888.700 562 L891.300 564.600 M891.300 562 L888.700 564.600" stroke="#fff" stroke-width="0.900"/>
<rect x="900.500" y="555.500" width="8" height="6" fill="#e8e8e8" stroke="#666" stroke-width="0.700"/>
<rect x="904.500" y="558.500" width="6.500" height="5" fill="#f4f4f4" stroke="#666" stroke-width="0.700"/>
<path d="M903.500 564 V566.500 H909" stroke="#666" stroke-width="0.700" fill="none"/>
<path d="M918 558.500 H920 L923.300 555.500 V566 L920 563 H918 Z" fill="#f0f0f0" stroke="#777" stroke-width="0.500"/>
<circle cx="926" cy="563.300" r="3" fill="#e02020"/><path d="M924.700 562 L927.300 564.600 M927.300 562 L924.700 564.600" stroke="#fff" stroke-width="0.900"/>
<rect x="936.500" y="557.500" width="7" height="8.500" fill="#d8d8d8" stroke="#777" stroke-width="0.600"/>
<path d="M938.500 557.500 V555.500 H942 V557.500" fill="none" stroke="#4a78c0" stroke-width="1"/>
<rect x="941" y="560" width="6" height="5.500" fill="#1a1a1a"/><rect x="942.300" y="561.500" width="3" height="2.500" fill="#30d030"/>
</svg>

<div class="abs" style="left:953px;top:547.500px;width:60px;text-align:center;font-size:9.400px;color:#22323c;line-height:12px;white-space:nowrap;transform:scaleX(0.840)">16:22</div>
<div class="abs" style="left:953px;top:560.500px;width:60px;text-align:center;font-size:9.400px;color:#22323c;line-height:12px;white-space:nowrap;transform:scaleX(0.925)">03/02/2018</div>

</div>
</body>
</html>
